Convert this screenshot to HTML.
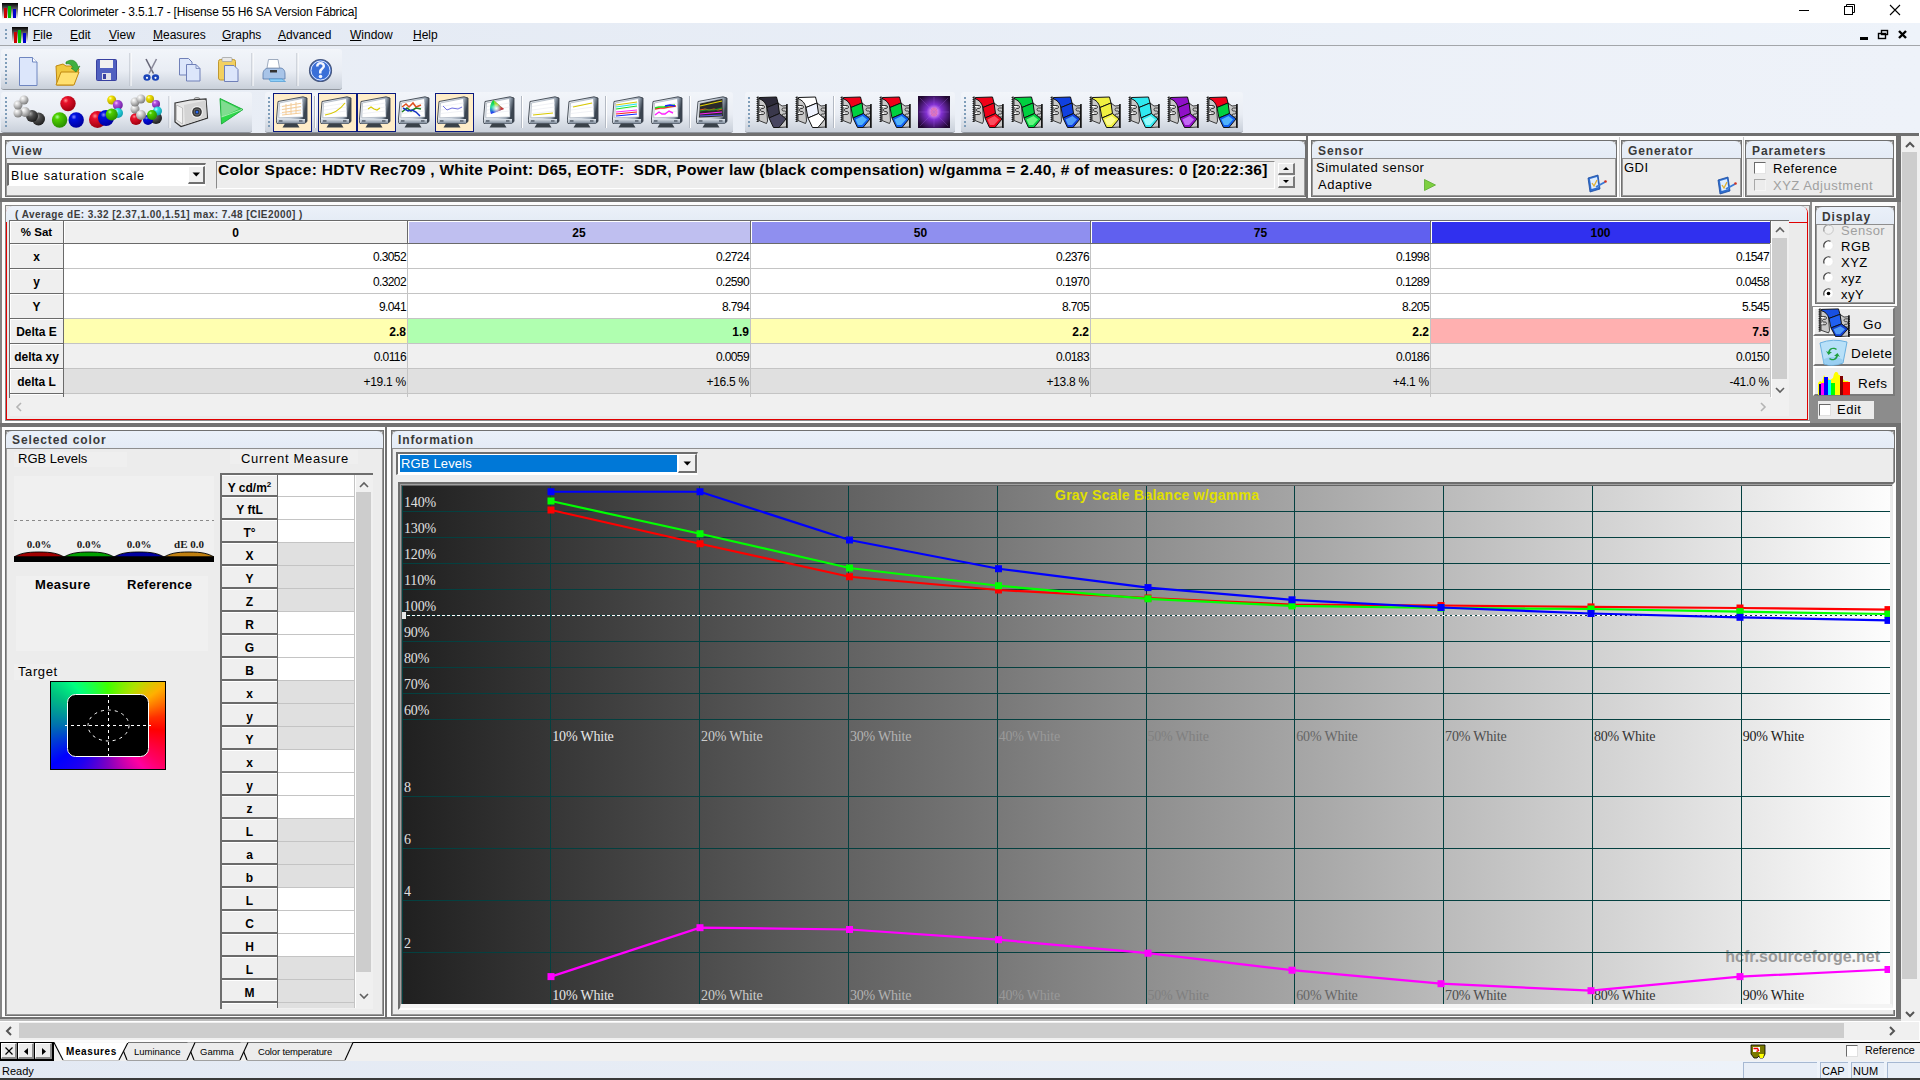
<!DOCTYPE html>
<html><head><meta charset="utf-8">
<style>
*{margin:0;padding:0;box-sizing:border-box}
html,body{width:1920px;height:1080px;overflow:hidden;background:#eef2f8;font-family:"Liberation Sans",sans-serif;font-size:12px;color:#000;position:relative}
.a{position:absolute}
.t{position:absolute;white-space:nowrap;line-height:1}
.b{font-weight:bold}
.u{font-size:13px;letter-spacing:0.5px}
.hd{position:absolute;background:linear-gradient(#eaf0f8,#e2e9f4);border-bottom:1px solid #a8acb2;border-radius:5px 5px 0 0}
.hdt{position:absolute;font-weight:bold;font-size:12px;letter-spacing:0.9px;color:#3a3a3a;white-space:nowrap;line-height:1}
</style></head><body>
<!-- TITLE BAR -->
<div class="a" style="left:0;top:0;width:1920px;height:23px;background:#fff"></div>
<svg class="a" style="left:2px;top:3px" width="16" height="16"><defs><linearGradient id="ig" x1="0" y1="0" x2="0" y2="1"><stop offset="0" stop-color="#000"/><stop offset="1" stop-color="#fff"/></linearGradient></defs><rect x="0" y="0" width="16" height="16" fill="url(#ig)"/><rect x="2" y="5" width="3" height="10" fill="#c00"/><rect x="6" y="3" width="3" height="12" fill="#0b0"/><rect x="11" y="6" width="3" height="9" fill="#00c"/></svg>
<div class="t" style="left:23px;top:6px;font-size:12px;letter-spacing:-0.21px">HCFR Colorimeter - 3.5.1.7 - [Hisense 55 H6 SA Version Fábrica]</div>
<svg class="a" style="left:1795px;top:0" width="125" height="23"><path d="M4 10.5h10" stroke="#000" stroke-width="1"/><rect x="49.5" y="6.5" width="8" height="8" fill="none" stroke="#000"/><path d="M51.5 6.5v-2h8v8h-2" fill="none" stroke="#000"/><path d="M95 5l10 10M105 5l-10 10" stroke="#000" stroke-width="1.1"/></svg>
<!-- MENU BAR -->
<div class="a" style="left:0;top:23px;width:1920px;height:22px;background:linear-gradient(90deg,#e3e9f3,#eef3fa)"></div>
<div class="a" style="left:0;top:45px;width:1920px;height:1px;background:#a3a6aa"></div>
<div class="a" style="left:0;top:46px;width:1920px;height:88px;background:linear-gradient(90deg,#e8edf5,#eef2f9)"></div>
<svg class="a" style="left:4px;top:27px" width="4" height="16"><rect x="1" y="2" width="2" height="2" fill="#7f9db9"/><rect x="1" y="6" width="2" height="2" fill="#7f9db9"/><rect x="1" y="10" width="2" height="2" fill="#7f9db9"/></svg>
<svg class="a" style="left:12px;top:27px" width="16" height="16"><defs><linearGradient id="ig2" x1="0" y1="0" x2="0" y2="1"><stop offset="0" stop-color="#000"/><stop offset="1" stop-color="#fff"/></linearGradient></defs><rect x="0" y="0" width="16" height="16" fill="url(#ig2)"/><rect x="2" y="5" width="3" height="11" fill="#c00"/><rect x="6" y="3" width="3" height="13" fill="#0b0"/><rect x="11" y="6" width="3" height="10" fill="#00c"/></svg>
<div class="t" style="left:33px;top:29px"><u>F</u>ile</div>
<div class="t" style="left:70px;top:29px"><u>E</u>dit</div>
<div class="t" style="left:109px;top:29px"><u>V</u>iew</div>
<div class="t" style="left:153px;top:29px"><u>M</u>easures</div>
<div class="t" style="left:222px;top:29px"><u>G</u>raphs</div>
<div class="t" style="left:278px;top:29px"><u>A</u>dvanced</div>
<div class="t" style="left:350px;top:29px"><u>W</u>indow</div>
<div class="t" style="left:413px;top:29px"><u>H</u>elp</div>
<svg class="a" style="left:1855px;top:28px" width="56" height="14"><rect x="5" y="9" width="8" height="3" fill="#000"/><rect x="23.5" y="5.5" width="7" height="5" fill="none" stroke="#000" stroke-width="1.4"/><rect x="26.5" y="2.5" width="6" height="4" fill="none" stroke="#000" stroke-width="1.4"/><path d="M44 3l7 7M51 3l-7 7" stroke="#000" stroke-width="2.4"/></svg>
<!-- TOOLBARS -->
<svg class="a" style="left:0;top:0" width="0" height="0"><defs>
<linearGradient id="tbg" x1="0" y1="0" x2="0" y2="1"><stop offset="0" stop-color="#f3f6fb"/><stop offset="0.55" stop-color="#e8edf4"/><stop offset="1" stop-color="#c8cfd9"/></linearGradient>
<radialGradient id="sR" cx="0.35" cy="0.3" r="0.7"><stop offset="0" stop-color="#ff9090"/><stop offset="0.25" stop-color="#e8102a"/><stop offset="1" stop-color="#a00010"/></radialGradient>
<radialGradient id="sG" cx="0.35" cy="0.3" r="0.7"><stop offset="0" stop-color="#b0ffa0"/><stop offset="0.25" stop-color="#4fd000"/><stop offset="1" stop-color="#2a9000"/></radialGradient>
<radialGradient id="sB" cx="0.35" cy="0.3" r="0.7"><stop offset="0" stop-color="#9090ff"/><stop offset="0.25" stop-color="#0010e0"/><stop offset="1" stop-color="#0000a0"/></radialGradient>
<radialGradient id="sW" cx="0.35" cy="0.3" r="0.7"><stop offset="0" stop-color="#fff"/><stop offset="0.4" stop-color="#d0d0d0"/><stop offset="1" stop-color="#808080"/></radialGradient>
<radialGradient id="sK" cx="0.35" cy="0.3" r="0.7"><stop offset="0" stop-color="#aaa"/><stop offset="0.4" stop-color="#505050"/><stop offset="1" stop-color="#202020"/></radialGradient>
<radialGradient id="sM" cx="0.35" cy="0.3" r="0.7"><stop offset="0" stop-color="#ffc0ff"/><stop offset="0.3" stop-color="#b050e0"/><stop offset="1" stop-color="#7020a0"/></radialGradient>
<radialGradient id="sC" cx="0.35" cy="0.3" r="0.7"><stop offset="0" stop-color="#d0ffff"/><stop offset="0.3" stop-color="#30e0e8"/><stop offset="1" stop-color="#10a0b0"/></radialGradient>
<radialGradient id="sY" cx="0.35" cy="0.3" r="0.7"><stop offset="0" stop-color="#ffffc0"/><stop offset="0.3" stop-color="#f0e000"/><stop offset="1" stop-color="#b0a000"/></radialGradient>
<linearGradient id="mon" x1="0" y1="0" x2="1" y2="0"><stop offset="0" stop-color="#e8ecf0"/><stop offset="0.6" stop-color="#b8c4d0"/><stop offset="1" stop-color="#505a68"/></linearGradient>
<symbol id="monitor" viewBox="0 0 32 32"><path d="M3 5.5 L26 1.5 L30 3 L30 25 L2 25 Z" fill="url(#mon)" stroke="#4a525c" stroke-width="0.8"/><path d="M5 8 L25 4.5 L26 19.5 L4 20.5 Z" fill="#fff" stroke="#8090a0" stroke-width="0.5"/><rect x="4" y="22" width="3" height="1.5" fill="#667"/><rect x="23" y="22" width="3" height="1.5" fill="#667"/><path d="M10 25 L20 25 L23 29 L7 29 Z" fill="#3a4048"/></symbol>
<symbol id="film" viewBox="0 0 32 32"><rect x="1" y="3" width="6" height="22" fill="#d8d8d8" stroke="#222" stroke-width="0.7"/><rect x="25" y="8" width="6" height="22" fill="#d8d8d8" stroke="#222" stroke-width="0.7"/><path d="M6 4 C14 1,18 4,20 10 L26 24 C26 29,23 31,19 31 L14 18 C12 11,9 10,6 11 Z" stroke="#111" stroke-width="1"/></symbol>
</defs></svg>
<!-- TB1 -->
<div class="a" style="left:1px;top:49px;width:341px;height:41px;background:linear-gradient(#f2f5fa,#e9edf4 55%,#c9d0da);border-bottom:1px solid #8f959d;border-radius:3px 3px 3px 3px"></div>
<svg class="a" style="left:5px;top:53px" width="4" height="34"><g fill="#7f9db9"><rect x="0" y="1" width="2" height="2"/><rect x="0" y="5" width="2" height="2"/><rect x="0" y="9" width="2" height="2"/><rect x="0" y="13" width="2" height="2"/><rect x="0" y="17" width="2" height="2"/><rect x="0" y="21" width="2" height="2"/><rect x="0" y="25" width="2" height="2"/><rect x="0" y="29" width="2" height="2"/></g></svg>
<svg class="a" style="left:0;top:46px" width="345" height="44">
<path d="M19.5 11.5h13l4.5 4.5v23.5h-17.5z" fill="#dce6fb" stroke="#6f86c0"/><path d="M32.5 11.5v4.5h4.5" fill="#fff" stroke="#6f86c0"/>
<path d="M56 20l7-2 3 2h10l3 3-6 16h-16z" fill="#f0c840" stroke="#c08810"/><path d="M56 39l5-13h18l-5 13z" fill="#ffe070" stroke="#c08810"/><path d="M66 16c6-4 11-1 12 5l2-1-4 6-5-4 2 0c-1-3-4-5-7-4z" fill="#40b040" stroke="#208020" stroke-width="0.6"/>
<rect x="96.5" y="13.5" width="20" height="21" rx="1" fill="#5060c0" stroke="#3840a0"/><rect x="100" y="14" width="13" height="8" fill="#f0f0f0"/><rect x="102" y="27" width="9" height="7" fill="#e0e0e8"/><rect x="103" y="28" width="3" height="5" fill="#3840a0"/>
<rect x="129.5" y="7" width="1" height="33" fill="#b4bac4"/><rect x="130.5" y="7" width="1" height="33" fill="#fff"/>
<path d="M146 13 L153.5 27.5" stroke="#667" stroke-width="1.6"/><path d="M156.5 13 L149 27.5" stroke="#889" stroke-width="1.6"/><ellipse cx="147" cy="31.5" rx="3.6" ry="3.2" fill="#1a44b8"/><ellipse cx="155.5" cy="31.5" rx="3.6" ry="3.2" fill="#1a44b8"/><circle cx="147" cy="31.8" r="1.1" fill="#fff"/><circle cx="155.5" cy="31.8" r="1.1" fill="#fff"/>
<path d="M179.5 12.5h9l3.5 3.5v13h-12.5z" fill="#dce6fb" stroke="#7080b8"/><path d="M186.5 18.5h9.5l4 4v12.5h-13.5z" fill="#dce6fb" stroke="#7080b8"/><path d="M196 18.5v4h4" fill="none" stroke="#7080b8" stroke-width="0.8"/>
<rect x="218.5" y="13.5" width="17" height="20.5" rx="2" fill="#f2d060" stroke="#c09830"/><rect x="222" y="11.5" width="10" height="4" rx="1" fill="#e8e8e8" stroke="#999" stroke-width="0.7"/><path d="M224.5 19.5h9.5l4 4v12h-13.5z" fill="#dce6fb" stroke="#7080b8"/>
<rect x="251.5" y="7" width="1" height="33" fill="#b4bac4"/><rect x="252.5" y="7" width="1" height="33" fill="#fff"/>
<path d="M263 28c0-4 3-6 6-6h11c3 0 5 2 5 6v5h-22z" fill="#a8c4e8" stroke="#5878a8" stroke-width="0.8"/><path d="M267 22l1.5-8.5h9.5l1.5 8.5z" fill="#fff" stroke="#8898b0" stroke-width="0.8"/><rect x="270" y="24" width="7" height="2.5" fill="#333"/><path d="M269 33h13l3.5 2.5h-15z" fill="#90d0f8" stroke="#3a90d0" stroke-width="0.6"/>
<rect x="296.5" y="7" width="1" height="33" fill="#b4bac4"/><rect x="297.5" y="7" width="1" height="33" fill="#fff"/>
<circle cx="320.5" cy="24.5" r="11" fill="#3a6fd8" stroke="#4a5a80" stroke-width="1.2"/><circle cx="320.5" cy="24.5" r="9.5" fill="none" stroke="#dfe8ff" stroke-width="1"/><path d="M316 20.5c0-3 2-4.5 4.5-4.5s4.5 1.5 4.5 4c0 3-3.5 3.5-3.5 6.5v1h-2.5v-1.5c0-3.5 3.5-4 3.5-6 0-1-1-1.8-2-1.8s-2 .8-2 2.3z" fill="#f4f6ff"/><circle cx="320.5" cy="30.5" r="1.8" fill="#f4f6ff"/>
</svg>
<!-- TB2 seg1 -->
<div class="a" style="left:1px;top:92px;width:251px;height:41px;background:linear-gradient(#f2f5fa,#e9edf4 55%,#c9d0da);border-bottom:1px solid #8f959d;border-radius:3px"></div>
<svg class="a" style="left:5px;top:96px" width="4" height="34"><g fill="#7f9db9"><rect x="0" y="1" width="2" height="2"/><rect x="0" y="5" width="2" height="2"/><rect x="0" y="9" width="2" height="2"/><rect x="0" y="13" width="2" height="2"/><rect x="0" y="17" width="2" height="2"/><rect x="0" y="21" width="2" height="2"/><rect x="0" y="25" width="2" height="2"/><rect x="0" y="29" width="2" height="2"/></g></svg>
<svg class="a" style="left:0;top:88px" width="260" height="46">
<circle cx="38.5" cy="31" r="6.5" fill="url(#sK)"/><circle cx="32" cy="28" r="6" fill="url(#sK)"/><circle cx="25" cy="24" r="5" fill="url(#sW)"/><circle cx="18" cy="25" r="4.5" fill="url(#sW)"/><circle cx="18" cy="17" r="4.5" fill="url(#sW)"/><circle cx="24" cy="12" r="4.5" fill="url(#sW)"/>
<circle cx="68" cy="15.6" r="7.7" fill="url(#sR)"/><circle cx="59.6" cy="32" r="7.7" fill="url(#sG)"/><circle cx="76.2" cy="32" r="7.7" fill="url(#sB)"/>
<circle cx="111.7" cy="12" r="4.5" fill="url(#sY)"/><circle cx="117.8" cy="17" r="5" fill="url(#sM)"/><circle cx="97.5" cy="31.4" r="8.5" fill="url(#sR)"/><circle cx="106" cy="30" r="8" fill="url(#sB)"/><circle cx="118" cy="25" r="5" fill="url(#sC)"/><circle cx="111.7" cy="26.4" r="6" fill="url(#sG)"/>
<circle cx="136" cy="31" r="6" fill="url(#sR)"/><circle cx="156" cy="30" r="6" fill="url(#sK)"/><circle cx="148" cy="32" r="5" fill="url(#sB)"/><circle cx="135" cy="21" r="4.5" fill="url(#sW)"/><circle cx="135" cy="14" r="4.5" fill="url(#sW)"/><circle cx="141" cy="11" r="4.5" fill="url(#sW)"/><circle cx="150" cy="11" r="4" fill="url(#sY)"/><circle cx="156" cy="16" r="4" fill="url(#sM)"/><circle cx="157.5" cy="23" r="4.5" fill="url(#sC)"/><circle cx="152" cy="27" r="5" fill="url(#sG)"/><circle cx="141" cy="27" r="5" fill="url(#sW)"/>
<rect x="168.5" y="8" width="1" height="32" fill="#b4bac4"/><rect x="169.5" y="8" width="1" height="32" fill="#fff"/>
<ellipse cx="197" cy="11" rx="3" ry="1.5" fill="#ccc" stroke="#555" stroke-width="0.6"/><path d="M175 15 L190 12 L206 11 L207.5 30 L181 38.5 L175 34 Z" fill="#e6e6e6" stroke="#333" stroke-width="1.2"/><path d="M184 17 L206 12.5 L206.5 29.5 L185 36.5 Z" fill="#d4d4d4"/><path d="M176.5 17v15l6 4v-16z" fill="#f4f4f4" stroke="#999" stroke-width="0.5"/><circle cx="197" cy="24" r="6" fill="#f0f0f0"/><circle cx="197" cy="24" r="4.8" fill="#333"/><circle cx="197" cy="24" r="3.4" fill="#666"/><circle cx="197" cy="24" r="2.2" fill="#222"/><circle cx="197" cy="24" r="1.5" fill="#2a6af0"/>
<path d="M220 10.5 L243 21.5 L221.5 36 Z" fill="#2ed84a" stroke="#22b040" stroke-width="1"/><path d="M221 12 L239 21 L221.5 29 Z" fill="#80dc90"/><path d="M221.5 29 L242 21.5" stroke="#c0f0c8" stroke-width="0.8"/>
</svg>
<svg class="a" style="left:0;top:0" width="0" height="0"><defs>
<linearGradient id="mon2" x1="0" y1="0" x2="1" y2="0.2"><stop offset="0" stop-color="#f4f6f8"/><stop offset="0.6" stop-color="#d0d8e2"/><stop offset="0.86" stop-color="#9aa6b4"/><stop offset="1" stop-color="#3a4450"/></linearGradient>
<linearGradient id="monb" x1="0" y1="0" x2="0" y2="1"><stop offset="0" stop-color="#dfe6ee"/><stop offset="1" stop-color="#7b8898"/></linearGradient>
<symbol id="monsym" viewBox="0 0 32 32"><path d="M2 5.5 L27 0.8 L31 2 L31 25.5 L28.5 27.5 L1 27.5 L0.3 25 Z" fill="url(#mon2)" stroke="#3a424c" stroke-width="0.9"/><path d="M3.5 7 L26.5 2.5 L27 21 L2.8 21.8 Z" fill="#fff" stroke="#8a96a6" stroke-width="0.5"/><path d="M4 10.5 L26.5 7M4 14 L26.5 11M4 17.5 L26.5 15" stroke="#eceef2" stroke-width="0.8"/><path d="M1 23h28v4.5h-27z" fill="url(#monb)"/><rect x="3" y="24.3" width="3.5" height="1.3" fill="#4a5460"/><rect x="23" y="24.3" width="3.5" height="1.3" fill="#4a5460"/><path d="M9 27.5 L21 27.5 L23.5 31.5 L6.5 31.5 Z" fill="#3a424a"/></symbol>
<symbol id="filmb" viewBox="0 0 32 32"><path d="M3 2 L8 3 C10 4,10.5 6,10.5 9 L11.5 25 L10.5 27.5 L3 24.5 Z" fill="#c8c8c8" stroke="#111" stroke-width="0.8"/><path d="M3 9.5h4c2 0 2 3 0 3h-1c-2 0-2 3 0 3h1c2 0 2 3 0 3h-4" fill="none" stroke="#111" stroke-width="0.8"/><path d="M3 10.5h3M3 17.5h2" stroke="#fff" stroke-width="1"/><path d="M22 7 L26 10 L30.5 9.5 L30.5 31 L23 31.5 Z" fill="#c8c8c8" stroke="#111" stroke-width="0.8"/><path d="M30.5 12h-3c-2 0-2 3 0 3h1c2 0 2 3 0 3h-1c-2 0-2 3 0 3h3" fill="none" stroke="#111" stroke-width="0.8"/><path d="M2 0.5V26" stroke="#111" stroke-width="1.3"/><path d="M1.2 1V26" stroke="#111" stroke-width="1.2" stroke-dasharray="1 1"/><path d="M30.8 8V32" stroke="#111" stroke-width="1.3"/><path d="M31.6 8.5V32" stroke="#111" stroke-width="1.2" stroke-dasharray="1 1"/></symbol>
</defs></svg>
<!-- TB2 seg2 -->
<div class="a" style="left:265px;top:92px;width:468px;height:41px;background:linear-gradient(#f2f5fa,#e9edf4 55%,#c9d0da);border-bottom:1px solid #8f959d;border-radius:3px"></div>
<svg class="a" style="left:268px;top:96px" width="4" height="34"><g fill="#7f9db9"><rect x="0" y="1" width="2" height="2"/><rect x="0" y="5" width="2" height="2"/><rect x="0" y="9" width="2" height="2"/><rect x="0" y="13" width="2" height="2"/><rect x="0" y="17" width="2" height="2"/><rect x="0" y="21" width="2" height="2"/><rect x="0" y="25" width="2" height="2"/><rect x="0" y="29" width="2" height="2"/></g></svg>
<div class="a" style="left:273px;top:93px;width:39px;height:39px;background:#ffedc8;border:1px solid #0a1a80"></div>
<div class="a" style="left:318px;top:93px;width:39px;height:39px;background:#ffedc8;border:1px solid #0a1a80"></div>
<div class="a" style="left:357px;top:93px;width:39px;height:39px;background:#ffedc8;border:1px solid #0a1a80"></div>
<div class="a" style="left:435px;top:93px;width:39px;height:39px;background:#ffedc8;border:1px solid #0a1a80"></div>
<svg class="a" style="left:260px;top:88px" width="480" height="46">
<rect x="54" y="8" width="1" height="32" fill="#b4bac4"/><rect x="55" y="8" width="1" height="32" fill="#fff"/>
<rect x="261" y="8" width="1" height="32" fill="#b4bac4"/><rect x="262" y="8" width="1" height="32" fill="#fff"/>
<rect x="345" y="8" width="1" height="32" fill="#b4bac4"/><rect x="346" y="8" width="1" height="32" fill="#fff"/>
<rect x="429" y="8" width="1" height="32" fill="#b4bac4"/><rect x="430" y="8" width="1" height="32" fill="#fff"/>
<g transform="translate(16,8)"><use href="#monsym" width="32" height="32"/><g stroke="#f4c890" stroke-width="0.9" fill="none"><path d="M6 10.5l19-3.2M6 13.5l19-3M6 16.5l19-2.5M6 19l19-2"/><path d="M10 8v11M15 7v11.5M20 6v12"/></g></g>
<g transform="translate(60,8)"><use href="#monsym" width="32" height="32"/><path d="M5 19c7-1 14-4 20-12" fill="none" stroke="#d8c800" stroke-width="1.2"/></g>
<g transform="translate(99,8)"><use href="#monsym" width="32" height="32"/><path d="M9 13l3-2 3 2 3 1 3-2" fill="none" stroke="#d8c800" stroke-width="1.2"/></g>
<g transform="translate(138,8)"><use href="#monsym" width="32" height="32"/><path d="M4 11l4-3 3 3 4-4 3 4 5-2" fill="none" stroke="#e05020" stroke-width="1.5"/><path d="M4 16l5-4 4 3 5-3 5 1" fill="none" stroke="#208020" stroke-width="1.5"/><path d="M5 12l5 3 4-1 4 2 4 4" fill="none" stroke="#1030c0" stroke-width="1.5"/></g>
<g transform="translate(177,8)"><use href="#monsym" width="32" height="32"/><path d="M6 10l4 4 5-2 6 1 4-2" fill="none" stroke="#6060e0" stroke-width="0.9"/></g>
<g transform="translate(223,8)"><use href="#monsym" width="32" height="32"/><defs><linearGradient id="cieg" x1="0" y1="0" x2="0" y2="1"><stop offset="0" stop-color="#00d020"/><stop offset="0.5" stop-color="#30e0a0"/><stop offset="1" stop-color="#2020ff"/></linearGradient><linearGradient id="cier" x1="0" y1="0" x2="1" y2="0"><stop offset="0.3" stop-color="#ff2020" stop-opacity="0"/><stop offset="1" stop-color="#ff1010" stop-opacity="1"/></linearGradient><radialGradient id="ciew" cx="0.45" cy="0.6" r="0.35"><stop offset="0" stop-color="#fff"/><stop offset="1" stop-color="#fff" stop-opacity="0"/></radialGradient></defs><path d="M8 18 C6 13,7 7,10.5 4 C13 6,16 9,21 13 Z" fill="url(#cieg)"/><path d="M8 18 C6 13,7 7,10.5 4 C13 6,16 9,21 13 Z" fill="url(#cier)"/><path d="M10.5 4 C12 6,14 7,16 9 L12 11 Z" fill="#e0f020" opacity="0.6"/><path d="M8 18 C6 13,7 7,10.5 4 C13 6,16 9,21 13 Z" fill="url(#ciew)"/></g>
<g transform="translate(268,8)"><use href="#monsym" width="32" height="32"/><path d="M5 19l20-2" stroke="#d8c800" stroke-width="1.2"/></g>
<g transform="translate(307,8)"><use href="#monsym" width="32" height="32"/><path d="M6 11l19-4" stroke="#d8c800" stroke-width="1.2"/></g>
<g transform="translate(352,8)"><use href="#monsym" width="32" height="32"/><g stroke-width="1.2" fill="none"><path d="M4 9l21-3" stroke="#d8c800"/><path d="M4 11l21-3" stroke="#20e8f0"/><path d="M4 13l21-3" stroke="#20e020"/><path d="M4 16l21-2" stroke="#ff20ff"/><path d="M4 18l21-2" stroke="#ff2020"/><path d="M4 20l21-2" stroke="#1020ff"/></g></g>
<g transform="translate(391,8)"><use href="#monsym" width="32" height="32"/><g stroke-width="1.4" fill="none"><path d="M4 13l5-1 4 0 5-1 7-1" stroke="#ff2020"/><path d="M4 12l4-1 5 0 4-1 7-1" stroke="#20e020"/><path d="M14 10l5-1 5 1" stroke="#1020ff"/><path d="M4 19l4-3 3 2 3 0 4-3 4 2" stroke="#ff20ff"/></g></g>
<g transform="translate(436,8)"><use href="#monsym" width="32" height="32"/><path d="M4 7.5 L26.5 2.8 L27 20.5 L3 21.5 Z" fill="#2a2a2a"/><g stroke-width="1.2" fill="none"><path d="M4 10l22-5" stroke="#e0d000"/><path d="M4 14l5-1 4 1 5-1 4 1 4-1" stroke="#e06020"/><path d="M4 15l6-1 4 0 4 0 8-2" stroke="#20a020"/><path d="M4 18l22-2" stroke="#ff20ff"/><path d="M4 20l22-1" stroke="#6060f0"/></g></g>
</svg>
<!-- TB2 seg3 -->
<div class="a" style="left:745px;top:92px;width:210px;height:41px;background:linear-gradient(#f2f5fa,#e9edf4 55%,#c9d0da);border-bottom:1px solid #8f959d;border-radius:3px"></div>
<svg class="a" style="left:748px;top:96px" width="4" height="34"><g fill="#7f9db9"><rect x="0" y="1" width="2" height="2"/><rect x="0" y="5" width="2" height="2"/><rect x="0" y="9" width="2" height="2"/><rect x="0" y="13" width="2" height="2"/><rect x="0" y="17" width="2" height="2"/><rect x="0" y="21" width="2" height="2"/><rect x="0" y="25" width="2" height="2"/><rect x="0" y="29" width="2" height="2"/></g></svg>
<!-- TB2 seg4 -->
<div class="a" style="left:961px;top:92px;width:282px;height:41px;background:linear-gradient(#f2f5fa,#e9edf4 55%,#c9d0da);border-bottom:1px solid #8f959d;border-radius:3px"></div>
<svg class="a" style="left:964px;top:96px" width="4" height="34"><g fill="#7f9db9"><rect x="0" y="1" width="2" height="2"/><rect x="0" y="5" width="2" height="2"/><rect x="0" y="9" width="2" height="2"/><rect x="0" y="13" width="2" height="2"/><rect x="0" y="17" width="2" height="2"/><rect x="0" y="21" width="2" height="2"/><rect x="0" y="25" width="2" height="2"/><rect x="0" y="29" width="2" height="2"/></g></svg>
<svg class="a" style="left:740px;top:88px" width="510" height="46">
<rect x="93" y="8" width="1" height="32" fill="#b4bac4"/><rect x="94" y="8" width="1" height="32" fill="#fff"/>
<g transform="translate(16,8)"><use href="#filmb" width="32" height="32"/><path d="M3.5 1.5 L20.5 1 L22 7 L11 11.5 C9.5 6.5,7 4,3.5 3 Z" fill="#2c2a38" stroke="#111" stroke-width="1"/><path d="M11 11.5 L22 7 L23.5 17.5 L13 22 Z" fill="#3a384c" stroke="#111" stroke-width="1"/><path d="M13 22 L23.5 17.5 L30 23 L23 31.5 L17.5 31.5 Z" fill="#484660" stroke="#111" stroke-width="1"/></g>
<g transform="translate(55,8)"><use href="#filmb" width="32" height="32"/><path d="M3.5 1.5 L20.5 1 L22 7 L11 11.5 C9.5 6.5,7 4,3.5 3 Z" fill="#ffffff" stroke="#111" stroke-width="1"/><path d="M11 11.5 L22 7 L23.5 17.5 L13 22 Z" fill="#f0f4ff" stroke="#111" stroke-width="1"/><path d="M13 22 L23.5 17.5 L30 23 L23 31.5 L17.5 31.5 Z" fill="#ffffff" stroke="#111" stroke-width="1"/></g>
<g transform="translate(100,8)"><use href="#filmb" width="32" height="32"/><path d="M3.5 1.5 L20.5 1 L22 7 L11 11.5 C9.5 6.5,7 4,3.5 3 Z" fill="#f00018" stroke="#111" stroke-width="1"/><path d="M11 11.5 L22 7 L23.5 17.5 L13 22 Z" fill="#00d040" stroke="#111" stroke-width="1"/><path d="M13 22 L23.5 17.5 L30 23 L23 31.5 L17.5 31.5 Z" fill="#1060f0" stroke="#111" stroke-width="1"/><path d="M15.5 23.5 L22.5 20 L27 23.5 L22 29 L18 29 Z" fill="#60c8ff" opacity="0.8"/></g>
<g transform="translate(139,8)"><use href="#filmb" width="32" height="32"/><path d="M3.5 1.5 L20.5 1 L22 7 L11 11.5 C9.5 6.5,7 4,3.5 3 Z" fill="#f00018" stroke="#111" stroke-width="1"/><path d="M11 11.5 L22 7 L23.5 17.5 L13 22 Z" fill="#00d040" stroke="#111" stroke-width="1"/><path d="M13 22 L23.5 17.5 L30 23 L23 31.5 L17.5 31.5 Z" fill="#1060f0" stroke="#111" stroke-width="1"/><path d="M15.5 23.5 L22.5 20 L27 23.5 L22 29 L18 29 Z" fill="#60c8ff" opacity="0.8"/></g>
<defs><radialGradient id="pur" cx="0.5" cy="0.5" r="0.6"><stop offset="0" stop-color="#fff"/><stop offset="0.12" stop-color="#f0a0ff"/><stop offset="0.4" stop-color="#8030d0"/><stop offset="1" stop-color="#200830"/></radialGradient></defs>
<rect x="178" y="8" width="32" height="32" fill="url(#pur)"/><ellipse cx="194" cy="24" rx="3.5" ry="4.5" fill="#e070b0" opacity="0.85"/><path d="M180 10l28 28M208 10l-28 28M194 9v30M179 24h30" stroke="#a060e0" stroke-width="0.5" opacity="0.6"/>
<g transform="translate(232,8)"><use href="#filmb" width="32" height="32"/><path d="M3.5 1.5 L20.5 1 L22 7 L11 11.5 C9.5 6.5,7 4,3.5 3 Z" fill="#f00018" stroke="#111" stroke-width="1"/><path d="M11 11.5 L22 7 L23.5 17.5 L13 22 Z" fill="#f00018" stroke="#111" stroke-width="1"/><path d="M13 22 L23.5 17.5 L30 23 L23 31.5 L17.5 31.5 Z" fill="#f00018" stroke="#111" stroke-width="1"/><path d="M15.5 23.5 L22.5 20 L27 23.5 L22 29 L18 29 Z" fill="#ff6070" opacity="0.8"/></g>
<g transform="translate(271,8)"><use href="#filmb" width="32" height="32"/><path d="M3.5 1.5 L20.5 1 L22 7 L11 11.5 C9.5 6.5,7 4,3.5 3 Z" fill="#00d040" stroke="#111" stroke-width="1"/><path d="M11 11.5 L22 7 L23.5 17.5 L13 22 Z" fill="#00d040" stroke="#111" stroke-width="1"/><path d="M13 22 L23.5 17.5 L30 23 L23 31.5 L17.5 31.5 Z" fill="#00d040" stroke="#111" stroke-width="1"/><path d="M15.5 23.5 L22.5 20 L27 23.5 L22 29 L18 29 Z" fill="#80ff90" opacity="0.8"/></g>
<g transform="translate(310,8)"><use href="#filmb" width="32" height="32"/><path d="M3.5 1.5 L20.5 1 L22 7 L11 11.5 C9.5 6.5,7 4,3.5 3 Z" fill="#1040e0" stroke="#111" stroke-width="1"/><path d="M11 11.5 L22 7 L23.5 17.5 L13 22 Z" fill="#1040e0" stroke="#111" stroke-width="1"/><path d="M13 22 L23.5 17.5 L30 23 L23 31.5 L17.5 31.5 Z" fill="#1040e0" stroke="#111" stroke-width="1"/><path d="M15.5 23.5 L22.5 20 L27 23.5 L22 29 L18 29 Z" fill="#60b0ff" opacity="0.8"/></g>
<g transform="translate(349,8)"><use href="#filmb" width="32" height="32"/><path d="M3.5 1.5 L20.5 1 L22 7 L11 11.5 C9.5 6.5,7 4,3.5 3 Z" fill="#f0f040" stroke="#111" stroke-width="1"/><path d="M11 11.5 L22 7 L23.5 17.5 L13 22 Z" fill="#f0f040" stroke="#111" stroke-width="1"/><path d="M13 22 L23.5 17.5 L30 23 L23 31.5 L17.5 31.5 Z" fill="#f0f040" stroke="#111" stroke-width="1"/><path d="M15.5 23.5 L22.5 20 L27 23.5 L22 29 L18 29 Z" fill="#ffffa0" opacity="0.8"/></g>
<g transform="translate(388,8)"><use href="#filmb" width="32" height="32"/><path d="M3.5 1.5 L20.5 1 L22 7 L11 11.5 C9.5 6.5,7 4,3.5 3 Z" fill="#30e8f0" stroke="#111" stroke-width="1"/><path d="M11 11.5 L22 7 L23.5 17.5 L13 22 Z" fill="#30e8f0" stroke="#111" stroke-width="1"/><path d="M13 22 L23.5 17.5 L30 23 L23 31.5 L17.5 31.5 Z" fill="#30e8f0" stroke="#111" stroke-width="1"/><path d="M15.5 23.5 L22.5 20 L27 23.5 L22 29 L18 29 Z" fill="#b0ffff" opacity="0.8"/></g>
<g transform="translate(427,8)"><use href="#filmb" width="32" height="32"/><path d="M3.5 1.5 L20.5 1 L22 7 L11 11.5 C9.5 6.5,7 4,3.5 3 Z" fill="#9010c8" stroke="#111" stroke-width="1"/><path d="M11 11.5 L22 7 L23.5 17.5 L13 22 Z" fill="#9010c8" stroke="#111" stroke-width="1"/><path d="M13 22 L23.5 17.5 L30 23 L23 31.5 L17.5 31.5 Z" fill="#9010c8" stroke="#111" stroke-width="1"/><path d="M15.5 23.5 L22.5 20 L27 23.5 L22 29 L18 29 Z" fill="#d080ff" opacity="0.8"/></g>
<g transform="translate(466,8)"><use href="#filmb" width="32" height="32"/><path d="M3.5 1.5 L20.5 1 L22 7 L11 11.5 C9.5 6.5,7 4,3.5 3 Z" fill="#f00018" stroke="#111" stroke-width="1"/><path d="M11 11.5 L22 7 L23.5 17.5 L13 22 Z" fill="#00d040" stroke="#111" stroke-width="1"/><path d="M13 22 L23.5 17.5 L30 23 L23 31.5 L17.5 31.5 Z" fill="#1060f0" stroke="#111" stroke-width="1"/><path d="M15.5 23.5 L22.5 20 L27 23.5 L22 29 L18 29 Z" fill="#60c8ff" opacity="0.8"/></g>
</svg>
<!-- CONTENT FRAMES -->
<div class="a" style="left:0;top:133px;width:1920px;height:909px;background:#fdfdfd"></div>
<div class="a" style="left:0;top:133px;width:1919px;height:3px;background:#6f6f6f"></div>
<div class="a" style="left:0;top:136px;width:2px;height:906px;background:#858585"></div>
<div class="a" style="left:1896px;top:136px;width:5px;height:885px;background:#717171"></div>
<div class="a" style="left:1901px;top:136px;width:19px;height:886px;background:#f0f0f0"></div>
<div class="a" style="left:1902px;top:152px;width:15px;height:827px;background:#cdcdcd"></div>
<svg class="a" style="left:1901px;top:136px" width="19" height="886"><path d="M5 11l4-4 4 4" fill="none" stroke="#555" stroke-width="2"/><path d="M5 876l4 4 4-4" fill="none" stroke="#555" stroke-width="2"/></svg>
<!-- row separators -->
<div class="a" style="left:0;top:198px;width:1901px;height:4px;background:#717171"></div>
<div class="a" style="left:0;top:423px;width:1901px;height:4px;background:#717171"></div>
<div class="a" style="left:0;top:1017px;width:1901px;height:3px;background:#717171"></div>
<!-- vertical separators top row -->
<div class="a" style="left:1306px;top:136px;width:2px;height:62px;background:#717171"></div>
<!-- mid row separator -->
<div class="a" style="left:1810px;top:202px;width:2px;height:221px;background:#8d8d8d"></div>
<div class="a" style="left:1812px;top:202px;width:89px;height:221px;background:#8d8d8d"></div>
<!-- bottom row separator -->
<div class="a" style="left:385px;top:427px;width:2px;height:590px;background:#717171"></div>
<!-- TOP PANES -->
<div class="a" style="left:5px;top:140px;width:1301px;height:57px;background:#ececec;border:1px solid #707070;box-shadow:inset 0 0 0 1px #9a9a9a"></div>
<div class="a" style="left:6px;top:141px;width:1299px;height:18px;background:linear-gradient(#eaf0f9,#e4ebf5);border-bottom:1px solid #8e8e8e;border-radius:6px 6px 0 0;box-shadow:0 0 0 1px #9a9a9a inset"></div>
<div class="a" style="left:6px;top:141px;width:1299px;height:18px;background:linear-gradient(#eaf0f9,#e4ebf5);border-bottom:1px solid #8e8e8e;border-radius:6px 6px 0 0"></div>
<div class="hdt" style="left:12px;top:145px">View</div>
<div class="a" style="left:1311px;top:140px;width:306px;height:57px;background:#ececec;border:1px solid #707070;box-shadow:inset 0 0 0 1px #9a9a9a"></div>
<div class="a" style="left:1312px;top:141px;width:304px;height:18px;background:linear-gradient(#eaf0f9,#e4ebf5);border-bottom:1px solid #8e8e8e;border-radius:6px 6px 0 0;box-shadow:0 0 0 1px #9a9a9a inset"></div>
<div class="a" style="left:1312px;top:141px;width:304px;height:18px;background:linear-gradient(#eaf0f9,#e4ebf5);border-bottom:1px solid #8e8e8e;border-radius:6px 6px 0 0"></div>
<div class="hdt" style="left:1318px;top:145px">Sensor</div>
<div class="a" style="left:1621px;top:140px;width:121px;height:57px;background:#ececec;border:1px solid #707070;box-shadow:inset 0 0 0 1px #9a9a9a"></div>
<div class="a" style="left:1622px;top:141px;width:119px;height:18px;background:linear-gradient(#eaf0f9,#e4ebf5);border-bottom:1px solid #8e8e8e;border-radius:6px 6px 0 0;box-shadow:0 0 0 1px #9a9a9a inset"></div>
<div class="a" style="left:1622px;top:141px;width:119px;height:18px;background:linear-gradient(#eaf0f9,#e4ebf5);border-bottom:1px solid #8e8e8e;border-radius:6px 6px 0 0"></div>
<div class="hdt" style="left:1628px;top:145px">Generator</div>
<div class="a" style="left:1745px;top:140px;width:149px;height:57px;background:#ececec;border:1px solid #707070;box-shadow:inset 0 0 0 1px #9a9a9a"></div>
<div class="a" style="left:1746px;top:141px;width:147px;height:18px;background:linear-gradient(#eaf0f9,#e4ebf5);border-bottom:1px solid #8e8e8e;border-radius:6px 6px 0 0;box-shadow:0 0 0 1px #9a9a9a inset"></div>
<div class="a" style="left:1746px;top:141px;width:147px;height:18px;background:linear-gradient(#eaf0f9,#e4ebf5);border-bottom:1px solid #8e8e8e;border-radius:6px 6px 0 0"></div>
<div class="hdt" style="left:1752px;top:145px">Parameters</div>
<div class="a" style="left:1619px;top:137px;width:1px;height:60px;background:#c8c8c8"></div>
<div class="a" style="left:1743px;top:137px;width:1px;height:60px;background:#c8c8c8"></div>
<!-- VIEW PANE CONTENT -->
<div class="a" style="left:7px;top:163px;width:199px;height:23px;background:#fff;border-top:2px solid #6e6e6e;border-left:2px solid #6e6e6e;border-right:1px solid #f4f4f4;border-bottom:1px solid #fff"></div>
<div class="t" style="left:11px;top:170px;font-size:12.5px;letter-spacing:0.85px">Blue saturation scale</div>
<div class="a" style="left:188px;top:166px;width:17px;height:18px;background:#f0f0f0;border-right:2px solid #707070;border-bottom:2px solid #707070;border-top:1px solid #fff;border-left:1px solid #fff"></div>
<svg class="a" style="left:192px;top:172px" width="9" height="5"><path d="M0.5 0.5h7.5l-3.75 4z" fill="#000"/></svg>
<div class="a" style="left:216px;top:161px;width:1059px;height:28px;background:#ededed;border-top:1px solid #8a8a8a;border-left:1px solid #8a8a8a;border-right:1px solid #fff;border-bottom:1px solid #fff"></div>
<div class="t b" style="left:218px;top:162px;font-size:15.5px;letter-spacing:0.29px">Color Space: HDTV Rec709 , White Point: D65, EOTF:&nbsp; SDR, Power law (black compensation) w/gamma = 2.40, # of measures: 0 [20:22:36]</div>
<div class="a" style="left:1278px;top:163px;width:17px;height:12px;background:#ececec;border-right:2px solid #7a7a7a;border-bottom:2px solid #7a7a7a;border-top:1px solid #fff;border-left:1px solid #fff"></div>
<div class="a" style="left:1278px;top:176px;width:17px;height:12px;background:#ececec;border-right:2px solid #7a7a7a;border-bottom:2px solid #7a7a7a;border-top:1px solid #fff;border-left:1px solid #fff"></div>
<svg class="a" style="left:1282px;top:165px" width="10" height="22"><path d="M1 5h6l-3-3z" fill="#000"/><path d="M1 15h6l-3 3z" fill="#000"/></svg>
<!-- SENSOR -->
<div class="t u" style="left:1316px;top:161px">Simulated sensor</div>
<div class="t u" style="left:1318px;top:178px">Adaptive</div>
<svg class="a" style="left:1423px;top:178px" width="14" height="14"><path d="M1.5 1.5l11 5.5-11 5.5z" fill="#7ed040" stroke="#5aaa30" stroke-width="0.8"/></svg>
<svg class="a" style="left:1586px;top:174px" width="22" height="20"><path d="M2 4l10-3 2 14-10 3z" fill="#2f6fd0" stroke="#1a4aa0" stroke-width="0.8"/><path d="M4 5l7-2 1.5 10-7 2z" fill="#dfeeff"/><path d="M6 9l2 3 3-6" fill="none" stroke="#e0b030" stroke-width="1.3"/><path d="M10 13l9-5" stroke="#3a7ad8" stroke-width="2"/><circle cx="19.5" cy="7.5" r="1.3" fill="#d03020"/></svg>
<!-- GENERATOR -->
<div class="t u" style="left:1624px;top:161px">GDI</div>
<svg class="a" style="left:1716px;top:176px" width="22" height="20"><path d="M2 4l10-3 2 14-10 3z" fill="#2f6fd0" stroke="#1a4aa0" stroke-width="0.8"/><path d="M4 5l7-2 1.5 10-7 2z" fill="#dfeeff"/><path d="M6 9l2 3 3-6" fill="none" stroke="#e0b030" stroke-width="1.3"/><path d="M10 13l9-5" stroke="#3a7ad8" stroke-width="2"/><circle cx="19.5" cy="7.5" r="1.3" fill="#d03020"/></svg>
<!-- PARAMETERS -->
<div class="a" style="left:1754px;top:162px;width:12px;height:12px;background:#fff;border-top:1px solid #6a6a6a;border-left:1px solid #6a6a6a;border-right:1px solid #e4e4e4;border-bottom:1px solid #e4e4e4"></div>
<div class="t u" style="left:1773px;top:162px">Reference</div>
<div class="a" style="left:1754px;top:179px;width:12px;height:12px;background:#ececec;border-top:1px solid #a8a8a8;border-left:1px solid #a8a8a8;border-right:1px solid #f4f4f4;border-bottom:1px solid #f4f4f4"></div>
<div class="t u" style="left:1773px;top:179px;color:#a0a0a0">XYZ Adjustment</div>
<!-- TABLE PANE -->
<div class="a" style="left:5px;top:205px;width:1805px;height:216px;background:#ebebeb;border:1px solid #8a8a8a"></div>
<div class="a" style="left:6px;top:206px;width:1802px;height:214px;border:1px solid #e00000;border-top-color:#8a8a8a;border-radius:7px 7px 0 0"></div>
<div class="a" style="left:6px;top:206px;width:1801px;height:16px;background:linear-gradient(#ecf1f9,#e4ebf5);border-radius:6px 6px 0 0"></div>
<div class="a" style="left:1788px;top:222px;width:19px;height:1px;background:#e00000"></div>
<div class="t b" style="left:15px;top:210px;font-size:10px;letter-spacing:0.45px;color:#3c3c3c">( Average dE: 3.32 [2.37,1.00,1.51] max: 7.48 [CIE2000] )</div>
<div class="a" style="left:9px;top:220px;width:1780px;height:178px;background:#f0f0f0;border-top:1px solid #6a6a6a;border-left:1px solid #6a6a6a"></div>
<div class="a" style="left:10px;top:221px;width:53px;height:22px;background:#efefef;border-top:1px solid #fff;border-left:1px solid #fff"></div>
<div class="t b" style="left:10px;top:227px;width:53px;text-align:center;font-size:11.5px;letter-spacing:0px">% Sat</div>
<div class="a" style="left:63px;top:221px;width:1px;height:176px;background:#6a6a6a"></div>
<div class="a" style="left:64px;top:221px;width:343px;height:22px;background:#f0f0f0;border-top:1px solid #fff;border-left:1px solid #fff"></div>
<div class="t b" style="left:64px;top:227px;width:343px;text-align:center;font-size:12px">0</div>
<div class="a" style="left:407px;top:221px;width:1px;height:22px;background:#6a6a6a"></div>
<div class="a" style="left:408px;top:221px;width:342px;height:22px;background:#bfbff0;border-top:1px solid #fff;border-left:1px solid #fff"></div>
<div class="t b" style="left:408px;top:227px;width:342px;text-align:center;font-size:12px">25</div>
<div class="a" style="left:750px;top:221px;width:1px;height:22px;background:#6a6a6a"></div>
<div class="a" style="left:751px;top:221px;width:339px;height:22px;background:#8f8fef;border-top:1px solid #fff;border-left:1px solid #fff"></div>
<div class="t b" style="left:751px;top:227px;width:339px;text-align:center;font-size:12px">50</div>
<div class="a" style="left:1090px;top:221px;width:1px;height:22px;background:#6a6a6a"></div>
<div class="a" style="left:1091px;top:221px;width:339px;height:22px;background:#6060ef;border-top:1px solid #fff;border-left:1px solid #fff"></div>
<div class="t b" style="left:1091px;top:227px;width:339px;text-align:center;font-size:12px">75</div>
<div class="a" style="left:1430px;top:221px;width:1px;height:22px;background:#6a6a6a"></div>
<div class="a" style="left:1431px;top:221px;width:339px;height:22px;background:#3030ef;border-top:1px solid #fff;border-left:1px solid #fff"></div>
<div class="t b" style="left:1431px;top:227px;width:339px;text-align:center;font-size:12px">100</div>
<div class="a" style="left:1770px;top:221px;width:1px;height:22px;background:#6a6a6a"></div>
<div class="a" style="left:10px;top:243px;width:1760px;height:1px;background:#6a6a6a"></div>
<div class="a" style="left:10px;top:244px;width:53px;height:24px;background:#efefef;border-top:1px solid #fff;border-left:1px solid #fff"></div>
<div class="t b" style="left:10px;top:251px;width:53px;text-align:center;font-size:12px">x</div>
<div class="a" style="left:10px;top:268px;width:53px;height:1px;background:#6a6a6a"></div>
<div class="a" style="left:64px;top:244px;width:343px;height:24px;background:#ffffff"></div>
<div class="t" style="left:64px;top:251px;width:342px;text-align:right;font-size:12px;letter-spacing:-0.6px">0.3052</div>
<div class="a" style="left:407px;top:244px;width:1px;height:25px;background:#c4c4c4"></div>
<div class="a" style="left:408px;top:244px;width:342px;height:24px;background:#ffffff"></div>
<div class="t" style="left:408px;top:251px;width:341px;text-align:right;font-size:12px;letter-spacing:-0.6px">0.2724</div>
<div class="a" style="left:750px;top:244px;width:1px;height:25px;background:#c4c4c4"></div>
<div class="a" style="left:751px;top:244px;width:339px;height:24px;background:#ffffff"></div>
<div class="t" style="left:751px;top:251px;width:338px;text-align:right;font-size:12px;letter-spacing:-0.6px">0.2376</div>
<div class="a" style="left:1090px;top:244px;width:1px;height:25px;background:#c4c4c4"></div>
<div class="a" style="left:1091px;top:244px;width:339px;height:24px;background:#ffffff"></div>
<div class="t" style="left:1091px;top:251px;width:338px;text-align:right;font-size:12px;letter-spacing:-0.6px">0.1998</div>
<div class="a" style="left:1430px;top:244px;width:1px;height:25px;background:#c4c4c4"></div>
<div class="a" style="left:1431px;top:244px;width:339px;height:24px;background:#ffffff"></div>
<div class="t" style="left:1431px;top:251px;width:338px;text-align:right;font-size:12px;letter-spacing:-0.6px">0.1547</div>
<div class="a" style="left:1770px;top:244px;width:1px;height:25px;background:#c4c4c4"></div>
<div class="a" style="left:64px;top:268px;width:1706px;height:1px;background:#c4c4c4"></div>
<div class="a" style="left:10px;top:269px;width:53px;height:24px;background:#efefef;border-top:1px solid #fff;border-left:1px solid #fff"></div>
<div class="t b" style="left:10px;top:276px;width:53px;text-align:center;font-size:12px">y</div>
<div class="a" style="left:10px;top:293px;width:53px;height:1px;background:#6a6a6a"></div>
<div class="a" style="left:64px;top:269px;width:343px;height:24px;background:#ffffff"></div>
<div class="t" style="left:64px;top:276px;width:342px;text-align:right;font-size:12px;letter-spacing:-0.6px">0.3202</div>
<div class="a" style="left:407px;top:269px;width:1px;height:25px;background:#c4c4c4"></div>
<div class="a" style="left:408px;top:269px;width:342px;height:24px;background:#ffffff"></div>
<div class="t" style="left:408px;top:276px;width:341px;text-align:right;font-size:12px;letter-spacing:-0.6px">0.2590</div>
<div class="a" style="left:750px;top:269px;width:1px;height:25px;background:#c4c4c4"></div>
<div class="a" style="left:751px;top:269px;width:339px;height:24px;background:#ffffff"></div>
<div class="t" style="left:751px;top:276px;width:338px;text-align:right;font-size:12px;letter-spacing:-0.6px">0.1970</div>
<div class="a" style="left:1090px;top:269px;width:1px;height:25px;background:#c4c4c4"></div>
<div class="a" style="left:1091px;top:269px;width:339px;height:24px;background:#ffffff"></div>
<div class="t" style="left:1091px;top:276px;width:338px;text-align:right;font-size:12px;letter-spacing:-0.6px">0.1289</div>
<div class="a" style="left:1430px;top:269px;width:1px;height:25px;background:#c4c4c4"></div>
<div class="a" style="left:1431px;top:269px;width:339px;height:24px;background:#ffffff"></div>
<div class="t" style="left:1431px;top:276px;width:338px;text-align:right;font-size:12px;letter-spacing:-0.6px">0.0458</div>
<div class="a" style="left:1770px;top:269px;width:1px;height:25px;background:#c4c4c4"></div>
<div class="a" style="left:64px;top:293px;width:1706px;height:1px;background:#c4c4c4"></div>
<div class="a" style="left:10px;top:294px;width:53px;height:24px;background:#efefef;border-top:1px solid #fff;border-left:1px solid #fff"></div>
<div class="t b" style="left:10px;top:301px;width:53px;text-align:center;font-size:12px">Y</div>
<div class="a" style="left:10px;top:318px;width:53px;height:1px;background:#6a6a6a"></div>
<div class="a" style="left:64px;top:294px;width:343px;height:24px;background:#ffffff"></div>
<div class="t" style="left:64px;top:301px;width:342px;text-align:right;font-size:12px;letter-spacing:-0.6px">9.041</div>
<div class="a" style="left:407px;top:294px;width:1px;height:25px;background:#c4c4c4"></div>
<div class="a" style="left:408px;top:294px;width:342px;height:24px;background:#ffffff"></div>
<div class="t" style="left:408px;top:301px;width:341px;text-align:right;font-size:12px;letter-spacing:-0.6px">8.794</div>
<div class="a" style="left:750px;top:294px;width:1px;height:25px;background:#c4c4c4"></div>
<div class="a" style="left:751px;top:294px;width:339px;height:24px;background:#ffffff"></div>
<div class="t" style="left:751px;top:301px;width:338px;text-align:right;font-size:12px;letter-spacing:-0.6px">8.705</div>
<div class="a" style="left:1090px;top:294px;width:1px;height:25px;background:#c4c4c4"></div>
<div class="a" style="left:1091px;top:294px;width:339px;height:24px;background:#ffffff"></div>
<div class="t" style="left:1091px;top:301px;width:338px;text-align:right;font-size:12px;letter-spacing:-0.6px">8.205</div>
<div class="a" style="left:1430px;top:294px;width:1px;height:25px;background:#c4c4c4"></div>
<div class="a" style="left:1431px;top:294px;width:339px;height:24px;background:#ffffff"></div>
<div class="t" style="left:1431px;top:301px;width:338px;text-align:right;font-size:12px;letter-spacing:-0.6px">5.545</div>
<div class="a" style="left:1770px;top:294px;width:1px;height:25px;background:#c4c4c4"></div>
<div class="a" style="left:64px;top:318px;width:1706px;height:1px;background:#c4c4c4"></div>
<div class="a" style="left:10px;top:319px;width:53px;height:24px;background:#efefef;border-top:1px solid #fff;border-left:1px solid #fff"></div>
<div class="t b" style="left:10px;top:326px;width:53px;text-align:center;font-size:12px">Delta E</div>
<div class="a" style="left:10px;top:343px;width:53px;height:1px;background:#6a6a6a"></div>
<div class="a" style="left:64px;top:319px;width:343px;height:24px;background:#ffffb0"></div>
<div class="t b" style="left:64px;top:326px;width:342px;text-align:right;font-size:12px">2.8</div>
<div class="a" style="left:407px;top:319px;width:1px;height:25px;background:#c4c4c4"></div>
<div class="a" style="left:408px;top:319px;width:342px;height:24px;background:#b0ffb0"></div>
<div class="t b" style="left:408px;top:326px;width:341px;text-align:right;font-size:12px">1.9</div>
<div class="a" style="left:750px;top:319px;width:1px;height:25px;background:#c4c4c4"></div>
<div class="a" style="left:751px;top:319px;width:339px;height:24px;background:#ffffb0"></div>
<div class="t b" style="left:751px;top:326px;width:338px;text-align:right;font-size:12px">2.2</div>
<div class="a" style="left:1090px;top:319px;width:1px;height:25px;background:#c4c4c4"></div>
<div class="a" style="left:1091px;top:319px;width:339px;height:24px;background:#ffffb0"></div>
<div class="t b" style="left:1091px;top:326px;width:338px;text-align:right;font-size:12px">2.2</div>
<div class="a" style="left:1430px;top:319px;width:1px;height:25px;background:#c4c4c4"></div>
<div class="a" style="left:1431px;top:319px;width:339px;height:24px;background:#ffb0b0"></div>
<div class="t b" style="left:1431px;top:326px;width:338px;text-align:right;font-size:12px">7.5</div>
<div class="a" style="left:1770px;top:319px;width:1px;height:25px;background:#c4c4c4"></div>
<div class="a" style="left:64px;top:343px;width:1706px;height:1px;background:#c4c4c4"></div>
<div class="a" style="left:10px;top:344px;width:53px;height:24px;background:#efefef;border-top:1px solid #fff;border-left:1px solid #fff"></div>
<div class="t b" style="left:10px;top:351px;width:53px;text-align:center;font-size:12px">delta xy</div>
<div class="a" style="left:10px;top:368px;width:53px;height:1px;background:#6a6a6a"></div>
<div class="a" style="left:64px;top:344px;width:343px;height:24px;background:#f0f0f0"></div>
<div class="t" style="left:64px;top:351px;width:342px;text-align:right;font-size:12px;letter-spacing:-0.6px">0.0116</div>
<div class="a" style="left:407px;top:344px;width:1px;height:25px;background:#c4c4c4"></div>
<div class="a" style="left:408px;top:344px;width:342px;height:24px;background:#f0f0f0"></div>
<div class="t" style="left:408px;top:351px;width:341px;text-align:right;font-size:12px;letter-spacing:-0.6px">0.0059</div>
<div class="a" style="left:750px;top:344px;width:1px;height:25px;background:#c4c4c4"></div>
<div class="a" style="left:751px;top:344px;width:339px;height:24px;background:#f0f0f0"></div>
<div class="t" style="left:751px;top:351px;width:338px;text-align:right;font-size:12px;letter-spacing:-0.6px">0.0183</div>
<div class="a" style="left:1090px;top:344px;width:1px;height:25px;background:#c4c4c4"></div>
<div class="a" style="left:1091px;top:344px;width:339px;height:24px;background:#f0f0f0"></div>
<div class="t" style="left:1091px;top:351px;width:338px;text-align:right;font-size:12px;letter-spacing:-0.6px">0.0186</div>
<div class="a" style="left:1430px;top:344px;width:1px;height:25px;background:#c4c4c4"></div>
<div class="a" style="left:1431px;top:344px;width:339px;height:24px;background:#f0f0f0"></div>
<div class="t" style="left:1431px;top:351px;width:338px;text-align:right;font-size:12px;letter-spacing:-0.6px">0.0150</div>
<div class="a" style="left:1770px;top:344px;width:1px;height:25px;background:#c4c4c4"></div>
<div class="a" style="left:64px;top:368px;width:1706px;height:1px;background:#c4c4c4"></div>
<div class="a" style="left:10px;top:369px;width:53px;height:24px;background:#efefef;border-top:1px solid #fff;border-left:1px solid #fff"></div>
<div class="t b" style="left:10px;top:376px;width:53px;text-align:center;font-size:12px">delta L</div>
<div class="a" style="left:10px;top:393px;width:53px;height:1px;background:#6a6a6a"></div>
<div class="a" style="left:64px;top:369px;width:343px;height:24px;background:#e0e0e0"></div>
<div class="t" style="left:64px;top:376px;width:342px;text-align:right;font-size:12px;letter-spacing:-0.25px">+19.1 %</div>
<div class="a" style="left:407px;top:369px;width:1px;height:25px;background:#c4c4c4"></div>
<div class="a" style="left:408px;top:369px;width:342px;height:24px;background:#e0e0e0"></div>
<div class="t" style="left:408px;top:376px;width:341px;text-align:right;font-size:12px;letter-spacing:-0.25px">+16.5 %</div>
<div class="a" style="left:750px;top:369px;width:1px;height:25px;background:#c4c4c4"></div>
<div class="a" style="left:751px;top:369px;width:339px;height:24px;background:#e0e0e0"></div>
<div class="t" style="left:751px;top:376px;width:338px;text-align:right;font-size:12px;letter-spacing:-0.25px">+13.8 %</div>
<div class="a" style="left:1090px;top:369px;width:1px;height:25px;background:#c4c4c4"></div>
<div class="a" style="left:1091px;top:369px;width:339px;height:24px;background:#e0e0e0"></div>
<div class="t" style="left:1091px;top:376px;width:338px;text-align:right;font-size:12px;letter-spacing:-0.25px">+4.1 %</div>
<div class="a" style="left:1430px;top:369px;width:1px;height:25px;background:#c4c4c4"></div>
<div class="a" style="left:1431px;top:369px;width:339px;height:24px;background:#e0e0e0"></div>
<div class="t" style="left:1431px;top:376px;width:338px;text-align:right;font-size:12px;letter-spacing:-0.25px">-41.0 %</div>
<div class="a" style="left:1770px;top:369px;width:1px;height:25px;background:#c4c4c4"></div>
<div class="a" style="left:64px;top:393px;width:1706px;height:1px;background:#c4c4c4"></div>
<div class="a" style="left:10px;top:394px;width:53px;height:3px;background:#efefef;border-top:1px solid #fff"></div>
<div class="a" style="left:64px;top:394px;width:1706px;height:3px;background:#f0f0f0"></div>
<div class="a" style="left:407px;top:394px;width:1px;height:3px;background:#c4c4c4"></div>
<div class="a" style="left:750px;top:394px;width:1px;height:3px;background:#c4c4c4"></div>
<div class="a" style="left:1090px;top:394px;width:1px;height:3px;background:#c4c4c4"></div>
<div class="a" style="left:1430px;top:394px;width:1px;height:3px;background:#c4c4c4"></div>
<div class="a" style="left:1770px;top:394px;width:1px;height:3px;background:#c4c4c4"></div>
<div class="a" style="left:1771px;top:221px;width:18px;height:177px;background:#f0f0f0;border-left:1px solid #fff"></div>
<div class="a" style="left:1772px;top:238px;width:15px;height:141px;background:#cdcdcd"></div>
<svg class="a" style="left:1771px;top:221px" width="18" height="177"><path d="M5 11l4-4 4 4" fill="none" stroke="#606060" stroke-width="1.6"/><path d="M5 167l4 4 4-4" fill="none" stroke="#606060" stroke-width="1.6"/></svg>
<div class="a" style="left:10px;top:398px;width:1779px;height:18px;background:#f0f0f0"></div>
<svg class="a" style="left:10px;top:398px" width="1779" height="18"><path d="M11 5l-4 4 4 4" fill="none" stroke="#b4b4b4" stroke-width="1.6"/><path d="M1751 5l4 4-4 4" fill="none" stroke="#b4b4b4" stroke-width="1.6"/></svg>
<!-- DISPLAY COLUMN -->
<div class="a" style="left:1812px;top:202px;width:89px;height:221px;background:#8c8c8c"></div>
<div class="a" style="left:1812px;top:202px;width:85px;height:104px;background:#fcfcfc"></div>
<div class="a" style="left:1815px;top:206px;width:80px;height:98px;background:#ececec;border:1px solid #707070;box-shadow:inset 0 0 0 1px #9a9a9a"></div>
<div class="a" style="left:1816px;top:207px;width:78px;height:18px;background:linear-gradient(#eaf0f9,#e4ebf5);border-bottom:1px solid #8e8e8e;border-radius:6px 6px 0 0;box-shadow:0 0 0 1px #9a9a9a inset"></div>
<div class="a" style="left:1816px;top:207px;width:78px;height:18px;background:linear-gradient(#eaf0f9,#e4ebf5);border-bottom:1px solid #8e8e8e;border-radius:6px 6px 0 0"></div>
<div class="hdt" style="left:1822px;top:211px">Display</div>
<svg class="a" style="left:1823px;top:224px" width="12" height="12"><circle cx="5.5" cy="5.5" r="4.8" fill="#f0f0f0" stroke="#c8c8c8" stroke-width="1"/><path d="M1.2 7.5A4.8 4.8 0 0 1 7.5 1.2" fill="none" stroke="#a0a0a0" stroke-width="1.2"/></svg>
<div class="t u" style="left:1841px;top:224px;color:#a0a0a0">Sensor</div>
<svg class="a" style="left:1823px;top:240px" width="12" height="12"><circle cx="5.5" cy="5.5" r="4.8" fill="#fff" stroke="#e8e8e8" stroke-width="1"/><path d="M1.2 7.5A4.8 4.8 0 0 1 7.5 1.2" fill="none" stroke="#404040" stroke-width="1.2"/></svg>
<div class="t u" style="left:1841px;top:240px;color:#000">RGB</div>
<svg class="a" style="left:1823px;top:256px" width="12" height="12"><circle cx="5.5" cy="5.5" r="4.8" fill="#fff" stroke="#e8e8e8" stroke-width="1"/><path d="M1.2 7.5A4.8 4.8 0 0 1 7.5 1.2" fill="none" stroke="#404040" stroke-width="1.2"/></svg>
<div class="t u" style="left:1841px;top:256px;color:#000">XYZ</div>
<svg class="a" style="left:1823px;top:272px" width="12" height="12"><circle cx="5.5" cy="5.5" r="4.8" fill="#fff" stroke="#e8e8e8" stroke-width="1"/><path d="M1.2 7.5A4.8 4.8 0 0 1 7.5 1.2" fill="none" stroke="#404040" stroke-width="1.2"/></svg>
<div class="t u" style="left:1841px;top:272px;color:#000">xyz</div>
<svg class="a" style="left:1823px;top:288px" width="12" height="12"><circle cx="5.5" cy="5.5" r="4.8" fill="#fff" stroke="#e8e8e8" stroke-width="1"/><path d="M1.2 7.5A4.8 4.8 0 0 1 7.5 1.2" fill="none" stroke="#404040" stroke-width="1.2"/><circle cx="5.5" cy="5.5" r="1.8" fill="#000"/></svg>
<div class="t u" style="left:1841px;top:288px;color:#000">xyY</div>
<div class="a" style="left:1813px;top:307px;width:82px;height:29px;background:#ebebeb;border-top:2px solid #fff;border-left:2px solid #fff;border-right:2px solid #7a7a7a;border-bottom:2px solid #7a7a7a"></div>
<div class="t u" style="left:1863px;top:318px;font-size:13.5px;letter-spacing:0.4px">Go</div>
<div class="a" style="left:1813px;top:336px;width:82px;height:30px;background:#ebebeb;border-top:2px solid #fff;border-left:2px solid #fff;border-right:2px solid #7a7a7a;border-bottom:2px solid #7a7a7a"></div>
<div class="t u" style="left:1851px;top:347px;font-size:13.5px;letter-spacing:0.4px">Delete</div>
<div class="a" style="left:1813px;top:366px;width:82px;height:30px;background:#ebebeb;border-top:2px solid #fff;border-left:2px solid #fff;border-right:2px solid #7a7a7a;border-bottom:2px solid #7a7a7a"></div>
<div class="t u" style="left:1858px;top:377px;font-size:13.5px;letter-spacing:0.4px">Refs</div>
<svg class="a" style="left:1818px;top:308px" width="32" height="29" viewBox="0 0 32 32" preserveAspectRatio="none"><use href="#filmb" width="32" height="32"/><path d="M3.5 1.5 L20.5 1 L22 7 L11 11.5 C9.5 6.5,7 4,3.5 3 Z" fill="#1850e0" stroke="#111" stroke-width="1"/><path d="M11 11.5 L22 7 L23.5 17.5 L13 22 Z" fill="#2060f0" stroke="#111" stroke-width="1"/><path d="M13 22 L23.5 17.5 L30 23 L23 31.5 L17.5 31.5 Z" fill="#1040d0" stroke="#111" stroke-width="1"/><path d="M15.5 23.5 L22.5 20 L27 23.5 L22 29 L18 29 Z" fill="#60b0ff" opacity="0.8"/></svg>
<svg class="a" style="left:1818px;top:338px" width="32" height="28"><path d="M2 5 Q15 0 29 4 L25 25 Q14 29 6 26 Z" fill="#b8e0f8" stroke="#6ab0e0" stroke-width="1"/><ellipse cx="15" cy="23" rx="10" ry="4" fill="#8cc8f0" opacity="0.7"/><path d="M19 11a5.5 5.5 0 0 0-9 3l-2-1 2.5 4 3.5-3-2 0a3.5 3.5 0 0 1 6-2z" fill="#20a040"/><path d="M11 21a5.5 5.5 0 0 0 9-3l2 1-2.5-4-3.5 3 2 0a3.5 3.5 0 0 1-6 2z" fill="#20a040"/></svg>
<svg class="a" style="left:1818px;top:372px" width="33" height="23"><path d="M0 23V11l2-2 2 1 2-7 2 4 2-1 2 2 3-2 1-4 2-3 2 2 1 3 2 0 2 3 2 2 3 0 2 3V23z" fill="#ffff00"/><rect x="1" y="12" width="3" height="11" fill="#000080"/><rect x="3" y="11" width="3" height="12" fill="#ff00ff"/><rect x="6" y="5" width="4" height="18" fill="#0000ff"/><rect x="10" y="8" width="3" height="15" fill="#00ffff"/><rect x="13" y="11" width="4" height="12" fill="#00ff00"/><rect x="17" y="3" width="5" height="20" fill="#ffff00"/><rect x="22" y="4" width="3" height="19" fill="#800000"/><rect x="25" y="10" width="7" height="13" fill="#ff0000"/></svg>
<div class="a" style="left:1818px;top:401px;width:56px;height:18px;background:#ececec"></div>
<div class="a" style="left:1819px;top:404px;width:12px;height:12px;background:#fff;border-top:1px solid #6a6a6a;border-left:1px solid #6a6a6a;border-right:1px solid #e0e0e0;border-bottom:1px solid #e0e0e0"></div>
<div class="t u" style="left:1837px;top:403px">Edit</div>
<!-- SELECTED COLOR PANE -->
<div class="a" style="left:5px;top:430px;width:379px;height:586px;background:#ececec;border:1px solid #707070;box-shadow:inset 0 0 0 1px #9a9a9a"></div>
<div class="a" style="left:6px;top:431px;width:377px;height:18px;background:linear-gradient(#eaf0f9,#e4ebf5);border-bottom:1px solid #8e8e8e;border-radius:6px 6px 0 0;box-shadow:0 0 0 1px #9a9a9a inset"></div>
<div class="a" style="left:6px;top:431px;width:377px;height:18px;background:linear-gradient(#eaf0f9,#e4ebf5);border-bottom:1px solid #8e8e8e;border-radius:6px 6px 0 0"></div>
<div class="hdt" style="left:12px;top:434px">Selected color</div>
<div class="a" style="left:14px;top:452px;width:113px;height:15px;background:#efefef"></div>
<div class="t" style="left:18px;top:452px;font-size:13px">RGB Levels</div>
<div class="a" style="left:14px;top:476px;width:200px;height:87px;background:#f0f0f0"></div>
<svg class="a" style="left:14px;top:476px" width="200" height="87"><path d="M0 44.5H200" stroke="#8a8a8a" stroke-width="1" stroke-dasharray="3 3"/><path d="M0 81 C6 77.5,12 76,25 76 C38 76,44 77.5,50 81 Z" fill="#a00000" stroke="#000" stroke-width="0.9"/><path d="M50 81 C56 77.5,62 76,75 76 C88 76,94 77.5,100 81 Z" fill="#00a000" stroke="#000" stroke-width="0.9"/><path d="M100 81 C106 77.5,112 76,125 76 C138 76,144 77.5,150 81 Z" fill="#0000a0" stroke="#000" stroke-width="0.9"/><path d="M150 81 C156 77.5,162 76,175 76 C188 76,194 77.5,200 81 Z" fill="#c08010" stroke="#000" stroke-width="0.9"/><rect x="0" y="80.5" width="200" height="5.5" fill="#000"/></svg>
<div class="t" style="left:14px;top:539px;width:50px;text-align:center;font-family:'Liberation Serif',serif;font-weight:bold;font-size:11px;color:#1a1a1a">0.0%</div>
<div class="t" style="left:64px;top:539px;width:50px;text-align:center;font-family:'Liberation Serif',serif;font-weight:bold;font-size:11px;color:#1a1a1a">0.0%</div>
<div class="t" style="left:114px;top:539px;width:50px;text-align:center;font-family:'Liberation Serif',serif;font-weight:bold;font-size:11px;color:#1a1a1a">0.0%</div>
<div class="t" style="left:164px;top:539px;width:50px;text-align:center;font-family:'Liberation Serif',serif;font-weight:bold;font-size:11px;color:#1a1a1a">dE 0.0</div>
<div class="a" style="left:16px;top:576px;width:192px;height:75px;background:#f0f0f0"></div>
<div class="t b" style="left:35px;top:578px;font-size:13px;letter-spacing:0.4px">Measure</div>
<div class="t b" style="left:127px;top:578px;font-size:13px;letter-spacing:0.25px">Reference</div>
<div class="a" style="left:14px;top:664px;width:46px;height:16px;background:#efefef"></div>
<div class="t" style="left:18px;top:665px;font-size:13px;letter-spacing:0.6px">Target</div>
<div class="a" style="left:50px;top:681px;width:116px;height:89px;border:1px solid #000;background:conic-gradient(from 0deg at 50% 50%, #40ff00 0deg, #b0e000 35deg, #ffb000 55deg, #ff3000 80deg, #ff0000 95deg, #ff0060 125deg, #ff00a0 140deg, #8000c0 180deg, #2000f0 215deg, #0000ff 235deg, #0070b0 270deg, #00c080 300deg, #00ff80 320deg, #40ff00 360deg)"></div>
<svg class="a" style="left:50px;top:681px" width="116" height="89"><rect x="17.5" y="13.5" width="81" height="62" rx="8" fill="#000" stroke="#fff" stroke-width="1"/>
<path d="M15 44.5H101" stroke="#fff" stroke-width="1" stroke-dasharray="3 3"/><path d="M58.5 13V76" stroke="#fff" stroke-width="1" stroke-dasharray="3 3"/>
<ellipse cx="58.5" cy="44.5" rx="20.5" ry="15.5" fill="none" stroke="#fff" stroke-width="1" stroke-dasharray="3 4"/></svg>
<div class="a" style="left:230px;top:450px;width:128px;height:14px;background:#efefef"></div>
<div class="t u" style="left:241px;top:452px;letter-spacing:0.7px">Current Measure</div>
<div class="a" style="left:220px;top:473px;width:153px;height:536px;background:#f0f0f0;border-top:2px solid #6e6e6e;border-left:2px solid #6e6e6e"></div>
<div class="a" style="left:222px;top:475px;width:55px;height:22px;background:#efefef;border-top:1px solid #fff;border-bottom:2px solid #6a6a6a"></div>
<div class="t b" style="left:222px;top:482px;width:55px;text-align:center;font-size:12px">Y cd/m<sup style="font-size:8px;vertical-align:5px;line-height:0">2</sup></div>
<div class="a" style="left:278px;top:475px;width:76px;height:22px;background:#fff;border-bottom:1px solid #c4c4c4"></div>
<div class="a" style="left:222px;top:497px;width:55px;height:23px;background:#efefef;border-top:1px solid #fff;border-bottom:2px solid #6a6a6a"></div>
<div class="t b" style="left:222px;top:504px;width:55px;text-align:center;font-size:12px">Y ftL</div>
<div class="a" style="left:278px;top:497px;width:76px;height:23px;background:#fff;border-bottom:1px solid #c4c4c4"></div>
<div class="a" style="left:222px;top:520px;width:55px;height:23px;background:#efefef;border-top:1px solid #fff;border-bottom:2px solid #6a6a6a"></div>
<div class="t b" style="left:222px;top:527px;width:55px;text-align:center;font-size:12px">T°</div>
<div class="a" style="left:278px;top:520px;width:76px;height:23px;background:#fff;border-bottom:1px solid #c4c4c4"></div>
<div class="a" style="left:222px;top:543px;width:55px;height:23px;background:#efefef;border-top:1px solid #fff;border-bottom:2px solid #6a6a6a"></div>
<div class="t b" style="left:222px;top:550px;width:55px;text-align:center;font-size:12px">X</div>
<div class="a" style="left:278px;top:543px;width:76px;height:23px;background:#e0e0e0;border-bottom:1px solid #c4c4c4"></div>
<div class="a" style="left:222px;top:566px;width:55px;height:23px;background:#efefef;border-top:1px solid #fff;border-bottom:2px solid #6a6a6a"></div>
<div class="t b" style="left:222px;top:573px;width:55px;text-align:center;font-size:12px">Y</div>
<div class="a" style="left:278px;top:566px;width:76px;height:23px;background:#e0e0e0;border-bottom:1px solid #c4c4c4"></div>
<div class="a" style="left:222px;top:589px;width:55px;height:23px;background:#efefef;border-top:1px solid #fff;border-bottom:2px solid #6a6a6a"></div>
<div class="t b" style="left:222px;top:596px;width:55px;text-align:center;font-size:12px">Z</div>
<div class="a" style="left:278px;top:589px;width:76px;height:23px;background:#e0e0e0;border-bottom:1px solid #c4c4c4"></div>
<div class="a" style="left:222px;top:612px;width:55px;height:23px;background:#efefef;border-top:1px solid #fff;border-bottom:2px solid #6a6a6a"></div>
<div class="t b" style="left:222px;top:619px;width:55px;text-align:center;font-size:12px">R</div>
<div class="a" style="left:278px;top:612px;width:76px;height:23px;background:#fff;border-bottom:1px solid #c4c4c4"></div>
<div class="a" style="left:222px;top:635px;width:55px;height:23px;background:#efefef;border-top:1px solid #fff;border-bottom:2px solid #6a6a6a"></div>
<div class="t b" style="left:222px;top:642px;width:55px;text-align:center;font-size:12px">G</div>
<div class="a" style="left:278px;top:635px;width:76px;height:23px;background:#fff;border-bottom:1px solid #c4c4c4"></div>
<div class="a" style="left:222px;top:658px;width:55px;height:23px;background:#efefef;border-top:1px solid #fff;border-bottom:2px solid #6a6a6a"></div>
<div class="t b" style="left:222px;top:665px;width:55px;text-align:center;font-size:12px">B</div>
<div class="a" style="left:278px;top:658px;width:76px;height:23px;background:#fff;border-bottom:1px solid #c4c4c4"></div>
<div class="a" style="left:222px;top:681px;width:55px;height:23px;background:#efefef;border-top:1px solid #fff;border-bottom:2px solid #6a6a6a"></div>
<div class="t b" style="left:222px;top:688px;width:55px;text-align:center;font-size:12px">x</div>
<div class="a" style="left:278px;top:681px;width:76px;height:23px;background:#e0e0e0;border-bottom:1px solid #c4c4c4"></div>
<div class="a" style="left:222px;top:704px;width:55px;height:23px;background:#efefef;border-top:1px solid #fff;border-bottom:2px solid #6a6a6a"></div>
<div class="t b" style="left:222px;top:711px;width:55px;text-align:center;font-size:12px">y</div>
<div class="a" style="left:278px;top:704px;width:76px;height:23px;background:#e0e0e0;border-bottom:1px solid #c4c4c4"></div>
<div class="a" style="left:222px;top:727px;width:55px;height:23px;background:#efefef;border-top:1px solid #fff;border-bottom:2px solid #6a6a6a"></div>
<div class="t b" style="left:222px;top:734px;width:55px;text-align:center;font-size:12px">Y</div>
<div class="a" style="left:278px;top:727px;width:76px;height:23px;background:#e0e0e0;border-bottom:1px solid #c4c4c4"></div>
<div class="a" style="left:222px;top:750px;width:55px;height:23px;background:#efefef;border-top:1px solid #fff;border-bottom:2px solid #6a6a6a"></div>
<div class="t b" style="left:222px;top:757px;width:55px;text-align:center;font-size:12px">x</div>
<div class="a" style="left:278px;top:750px;width:76px;height:23px;background:#fff;border-bottom:1px solid #c4c4c4"></div>
<div class="a" style="left:222px;top:773px;width:55px;height:23px;background:#efefef;border-top:1px solid #fff;border-bottom:2px solid #6a6a6a"></div>
<div class="t b" style="left:222px;top:780px;width:55px;text-align:center;font-size:12px">y</div>
<div class="a" style="left:278px;top:773px;width:76px;height:23px;background:#fff;border-bottom:1px solid #c4c4c4"></div>
<div class="a" style="left:222px;top:796px;width:55px;height:23px;background:#efefef;border-top:1px solid #fff;border-bottom:2px solid #6a6a6a"></div>
<div class="t b" style="left:222px;top:803px;width:55px;text-align:center;font-size:12px">z</div>
<div class="a" style="left:278px;top:796px;width:76px;height:23px;background:#fff;border-bottom:1px solid #c4c4c4"></div>
<div class="a" style="left:222px;top:819px;width:55px;height:23px;background:#efefef;border-top:1px solid #fff;border-bottom:2px solid #6a6a6a"></div>
<div class="t b" style="left:222px;top:826px;width:55px;text-align:center;font-size:12px">L</div>
<div class="a" style="left:278px;top:819px;width:76px;height:23px;background:#e0e0e0;border-bottom:1px solid #c4c4c4"></div>
<div class="a" style="left:222px;top:842px;width:55px;height:23px;background:#efefef;border-top:1px solid #fff;border-bottom:2px solid #6a6a6a"></div>
<div class="t b" style="left:222px;top:849px;width:55px;text-align:center;font-size:12px">a</div>
<div class="a" style="left:278px;top:842px;width:76px;height:23px;background:#e0e0e0;border-bottom:1px solid #c4c4c4"></div>
<div class="a" style="left:222px;top:865px;width:55px;height:23px;background:#efefef;border-top:1px solid #fff;border-bottom:2px solid #6a6a6a"></div>
<div class="t b" style="left:222px;top:872px;width:55px;text-align:center;font-size:12px">b</div>
<div class="a" style="left:278px;top:865px;width:76px;height:23px;background:#e0e0e0;border-bottom:1px solid #c4c4c4"></div>
<div class="a" style="left:222px;top:888px;width:55px;height:23px;background:#efefef;border-top:1px solid #fff;border-bottom:2px solid #6a6a6a"></div>
<div class="t b" style="left:222px;top:895px;width:55px;text-align:center;font-size:12px">L</div>
<div class="a" style="left:278px;top:888px;width:76px;height:23px;background:#fff;border-bottom:1px solid #c4c4c4"></div>
<div class="a" style="left:222px;top:911px;width:55px;height:23px;background:#efefef;border-top:1px solid #fff;border-bottom:2px solid #6a6a6a"></div>
<div class="t b" style="left:222px;top:918px;width:55px;text-align:center;font-size:12px">C</div>
<div class="a" style="left:278px;top:911px;width:76px;height:23px;background:#fff;border-bottom:1px solid #c4c4c4"></div>
<div class="a" style="left:222px;top:934px;width:55px;height:23px;background:#efefef;border-top:1px solid #fff;border-bottom:2px solid #6a6a6a"></div>
<div class="t b" style="left:222px;top:941px;width:55px;text-align:center;font-size:12px">H</div>
<div class="a" style="left:278px;top:934px;width:76px;height:23px;background:#fff;border-bottom:1px solid #c4c4c4"></div>
<div class="a" style="left:222px;top:957px;width:55px;height:23px;background:#efefef;border-top:1px solid #fff;border-bottom:2px solid #6a6a6a"></div>
<div class="t b" style="left:222px;top:964px;width:55px;text-align:center;font-size:12px">L</div>
<div class="a" style="left:278px;top:957px;width:76px;height:23px;background:#e0e0e0;border-bottom:1px solid #c4c4c4"></div>
<div class="a" style="left:222px;top:980px;width:55px;height:23px;background:#efefef;border-top:1px solid #fff;border-bottom:2px solid #6a6a6a"></div>
<div class="t b" style="left:222px;top:987px;width:55px;text-align:center;font-size:12px">M</div>
<div class="a" style="left:278px;top:980px;width:76px;height:23px;background:#e0e0e0;border-bottom:1px solid #c4c4c4"></div>
<div class="a" style="left:222px;top:1003px;width:55px;height:5px;background:#efefef;border-top:1px solid #fff"></div>
<div class="a" style="left:278px;top:1003px;width:76px;height:5px;background:#e0e0e0"></div>
<div class="a" style="left:277px;top:475px;width:1px;height:533px;background:#6a6a6a"></div>
<div class="a" style="left:354px;top:475px;width:1px;height:533px;background:#c4c4c4"></div>
<div class="a" style="left:355px;top:475px;width:18px;height:533px;background:#f0f0f0;border-left:1px solid #fff"></div>
<div class="a" style="left:356px;top:492px;width:15px;height:480px;background:#cdcdcd"></div>
<svg class="a" style="left:355px;top:475px" width="18" height="533"><path d="M5 12l4-4 4 4" fill="none" stroke="#606060" stroke-width="1.6"/><path d="M5 519l4 4 4-4" fill="none" stroke="#606060" stroke-width="1.6"/></svg>
<!-- INFORMATION PANE -->
<div class="a" style="left:391px;top:430px;width:1504px;height:586px;background:#ececec;border:1px solid #707070;box-shadow:inset 0 0 0 1px #9a9a9a"></div>
<div class="a" style="left:392px;top:431px;width:1502px;height:18px;background:linear-gradient(#eaf0f9,#e4ebf5);border-bottom:1px solid #8e8e8e;border-radius:6px 6px 0 0;box-shadow:0 0 0 1px #9a9a9a inset"></div>
<div class="a" style="left:392px;top:431px;width:1502px;height:18px;background:linear-gradient(#eaf0f9,#e4ebf5);border-bottom:1px solid #8e8e8e;border-radius:6px 6px 0 0"></div>
<div class="hdt" style="left:398px;top:434px">Information</div>
<div class="a" style="left:396px;top:452px;width:302px;height:23px;background:#fff;border-top:2px solid #6e6e6e;border-left:2px solid #6e6e6e;border-right:1px solid #f4f4f4;border-bottom:1px solid #fff"></div>
<div class="a" style="left:400px;top:455px;width:277px;height:17px;background:#0078d7"></div>
<div class="t" style="left:401px;top:457px;font-size:13px;color:#fff;letter-spacing:0.15px">RGB Levels</div>
<div class="a" style="left:678px;top:454px;width:19px;height:19px;background:#f0f0f0;border-right:2px solid #707070;border-bottom:2px solid #707070;border-top:1px solid #fff;border-left:1px solid #fff"></div>
<svg class="a" style="left:683px;top:461px" width="9" height="5"><path d="M0.5 0.5h7.5l-3.75 4z" fill="#000"/></svg>
<div class="a" style="left:398px;top:482px;width:1497px;height:528px;border-top:2px solid #6e6e6e;border-left:2px solid #6e6e6e;border-right:2px solid #fff;border-bottom:2px solid #fff"></div>
<div class="a" style="left:400px;top:484px;width:1493px;height:524px;border-top:1px solid #a0a0a0;border-left:1px solid #a0a0a0;border-right:1px solid #e8e8e8;border-bottom:4px solid #f4f4f4"></div>
<div class="a" style="left:401px;top:485px;width:1491px;height:519px;border-top:1px solid #646464;border-left:1px solid #646464"></div>
<svg class="a" style="left:402px;top:486px" width="1488" height="518" viewBox="402 486 1488 518">
<defs><linearGradient id="cbg" x1="0" y1="0" x2="1" y2="0"><stop offset="0" stop-color="#202020"/><stop offset="1" stop-color="#fdfdfd"/></linearGradient></defs>
<rect x="402" y="486" width="1488" height="518" fill="url(#cbg)"/>
<text x="1055" y="499.6" font-family="Liberation Sans" font-weight="bold" font-size="14" letter-spacing="0.25" fill="#e0e000">Gray Scale Balance w/gamma</text>
<text x="1880" y="962" text-anchor="end" font-family="Liberation Sans" font-weight="bold" font-size="16" fill="#9a9a9a">hcfr.sourceforge.net</text>
<text x="404" y="507" font-family="Liberation Serif" font-size="14" letter-spacing="-0.15" fill="#e0e0e0">140%</text>
<text x="404" y="533" font-family="Liberation Serif" font-size="14" letter-spacing="-0.15" fill="#e0e0e0">130%</text>
<text x="404" y="559" font-family="Liberation Serif" font-size="14" letter-spacing="-0.15" fill="#e0e0e0">120%</text>
<text x="404" y="585" font-family="Liberation Serif" font-size="14" letter-spacing="-0.15" fill="#e0e0e0">110%</text>
<text x="404" y="611" font-family="Liberation Serif" font-size="14" letter-spacing="-0.15" fill="#e0e0e0">100%</text>
<text x="404" y="637" font-family="Liberation Serif" font-size="14" letter-spacing="-0.15" fill="#e0e0e0">90%</text>
<text x="404" y="663" font-family="Liberation Serif" font-size="14" letter-spacing="-0.15" fill="#e0e0e0">80%</text>
<text x="404" y="689" font-family="Liberation Serif" font-size="14" letter-spacing="-0.15" fill="#e0e0e0">70%</text>
<text x="404" y="715" font-family="Liberation Serif" font-size="14" letter-spacing="-0.15" fill="#e0e0e0">60%</text>
<text x="404" y="792" font-family="Liberation Serif" font-size="14" fill="#e0e0e0">8</text>
<text x="404" y="844" font-family="Liberation Serif" font-size="14" fill="#e0e0e0">6</text>
<text x="404" y="896" font-family="Liberation Serif" font-size="14" fill="#e0e0e0">4</text>
<text x="404" y="948" font-family="Liberation Serif" font-size="14" fill="#e0e0e0">2</text>
<text x="552.3" y="741" font-family="Liberation Serif" font-size="14" letter-spacing="-0.2" fill="#e6e6e6">10% White</text>
<text x="552.3" y="999.5" font-family="Liberation Serif" font-size="14" letter-spacing="-0.2" fill="#e6e6e6">10% White</text>
<text x="701.1" y="741" font-family="Liberation Serif" font-size="14" letter-spacing="-0.2" fill="#cccccc">20% White</text>
<text x="701.1" y="999.5" font-family="Liberation Serif" font-size="14" letter-spacing="-0.2" fill="#cccccc">20% White</text>
<text x="849.9" y="741" font-family="Liberation Serif" font-size="14" letter-spacing="-0.2" fill="#b3b3b3">30% White</text>
<text x="849.9" y="999.5" font-family="Liberation Serif" font-size="14" letter-spacing="-0.2" fill="#b3b3b3">30% White</text>
<text x="998.7" y="741" font-family="Liberation Serif" font-size="14" letter-spacing="-0.2" fill="#999999">40% White</text>
<text x="998.7" y="999.5" font-family="Liberation Serif" font-size="14" letter-spacing="-0.2" fill="#999999">40% White</text>
<text x="1147.5" y="741" font-family="Liberation Serif" font-size="14" letter-spacing="-0.2" fill="#808080">50% White</text>
<text x="1147.5" y="999.5" font-family="Liberation Serif" font-size="14" letter-spacing="-0.2" fill="#808080">50% White</text>
<text x="1296.3" y="741" font-family="Liberation Serif" font-size="14" letter-spacing="-0.2" fill="#666666">60% White</text>
<text x="1296.3" y="999.5" font-family="Liberation Serif" font-size="14" letter-spacing="-0.2" fill="#666666">60% White</text>
<text x="1445.1" y="741" font-family="Liberation Serif" font-size="14" letter-spacing="-0.2" fill="#4d4d4d">70% White</text>
<text x="1445.1" y="999.5" font-family="Liberation Serif" font-size="14" letter-spacing="-0.2" fill="#4d4d4d">70% White</text>
<text x="1593.9" y="741" font-family="Liberation Serif" font-size="14" letter-spacing="-0.2" fill="#333333">80% White</text>
<text x="1593.9" y="999.5" font-family="Liberation Serif" font-size="14" letter-spacing="-0.2" fill="#333333">80% White</text>
<text x="1742.7" y="741" font-family="Liberation Serif" font-size="14" letter-spacing="-0.2" fill="#1a1a1a">90% White</text>
<text x="1742.7" y="999.5" font-family="Liberation Serif" font-size="14" letter-spacing="-0.2" fill="#1a1a1a">90% White</text>
<path d="M402 511.5H1890" stroke="#044040" stroke-width="1"/>
<path d="M402 537.5H1890" stroke="#044040" stroke-width="1"/>
<path d="M402 563.5H1890" stroke="#044040" stroke-width="1"/>
<path d="M402 589.5H1890" stroke="#044040" stroke-width="1"/>
<path d="M402 615.5H1890" stroke="#044040" stroke-width="1"/>
<path d="M402 641.5H1890" stroke="#044040" stroke-width="1"/>
<path d="M402 667.5H1890" stroke="#044040" stroke-width="1"/>
<path d="M402 693.5H1890" stroke="#044040" stroke-width="1"/>
<path d="M402 719.5H1890" stroke="#044040" stroke-width="1"/>
<path d="M402 796.5H1890" stroke="#044040" stroke-width="1"/>
<path d="M402 848.5H1890" stroke="#044040" stroke-width="1"/>
<path d="M402 900.5H1890" stroke="#044040" stroke-width="1"/>
<path d="M402 952.5H1890" stroke="#044040" stroke-width="1"/>
<path d="M402.5 486V1004" stroke="#044040" stroke-width="1"/>
<path d="M550.5 486V1004" stroke="#044040" stroke-width="1"/>
<path d="M699.5 486V1004" stroke="#044040" stroke-width="1"/>
<path d="M848.5 486V1004" stroke="#044040" stroke-width="1"/>
<path d="M997.5 486V1004" stroke="#044040" stroke-width="1"/>
<path d="M1146.5 486V1004" stroke="#044040" stroke-width="1"/>
<path d="M1294.5 486V1004" stroke="#044040" stroke-width="1"/>
<path d="M1443.5 486V1004" stroke="#044040" stroke-width="1"/>
<path d="M1592.5 486V1004" stroke="#044040" stroke-width="1"/>
<path d="M1741.5 486V1004" stroke="#044040" stroke-width="1"/>
<path d="M402 615.5H1890" stroke="#fff" stroke-width="1" stroke-dasharray="3 2"/>
<rect x="402" y="612" width="4" height="7" fill="#e8e8e8"/>
<polyline points="551,510 700,543.75 849.5,576.75 998.5,590 1148,598 1292,604.5 1441,605.5 1591,606.9 1740,608 1888,609.6" fill="none" stroke="#ff0000" stroke-width="2.2"/>
<rect x="547.5" y="506.5" width="7" height="7" fill="#ff0000"/>
<rect x="696.5" y="540.25" width="7" height="7" fill="#ff0000"/>
<rect x="846.0" y="573.25" width="7" height="7" fill="#ff0000"/>
<rect x="995.0" y="586.5" width="7" height="7" fill="#ff0000"/>
<rect x="1144.5" y="594.5" width="7" height="7" fill="#ff0000"/>
<rect x="1288.5" y="601.0" width="7" height="7" fill="#ff0000"/>
<rect x="1437.5" y="602.0" width="7" height="7" fill="#ff0000"/>
<rect x="1587.5" y="603.4" width="7" height="7" fill="#ff0000"/>
<rect x="1736.5" y="604.5" width="7" height="7" fill="#ff0000"/>
<rect x="1884.5" y="606.1" width="7" height="7" fill="#ff0000"/>
<polyline points="551,501 700,533.75 849.5,568 998.5,585.75 1148,598.8 1292,605.9 1441,608 1591,609 1740,611.7 1888,614" fill="none" stroke="#00ff00" stroke-width="2.2"/>
<rect x="547.5" y="497.5" width="7" height="7" fill="#00ff00"/>
<rect x="696.5" y="530.25" width="7" height="7" fill="#00ff00"/>
<rect x="846.0" y="564.5" width="7" height="7" fill="#00ff00"/>
<rect x="995.0" y="582.25" width="7" height="7" fill="#00ff00"/>
<rect x="1144.5" y="595.3" width="7" height="7" fill="#00ff00"/>
<rect x="1288.5" y="602.4" width="7" height="7" fill="#00ff00"/>
<rect x="1437.5" y="604.5" width="7" height="7" fill="#00ff00"/>
<rect x="1587.5" y="605.5" width="7" height="7" fill="#00ff00"/>
<rect x="1736.5" y="608.2" width="7" height="7" fill="#00ff00"/>
<rect x="1884.5" y="610.5" width="7" height="7" fill="#00ff00"/>
<polyline points="551,491.75 700,491.75 849.5,540 998.5,568.75 1148,587.6 1292,599.8 1441,607.5 1591,613.5 1740,617.3 1888,620.4" fill="none" stroke="#0000ff" stroke-width="2.2"/>
<rect x="547.5" y="488.25" width="7" height="7" fill="#0000ff"/>
<rect x="696.5" y="488.25" width="7" height="7" fill="#0000ff"/>
<rect x="846.0" y="536.5" width="7" height="7" fill="#0000ff"/>
<rect x="995.0" y="565.25" width="7" height="7" fill="#0000ff"/>
<rect x="1144.5" y="584.1" width="7" height="7" fill="#0000ff"/>
<rect x="1288.5" y="596.3" width="7" height="7" fill="#0000ff"/>
<rect x="1437.5" y="604.0" width="7" height="7" fill="#0000ff"/>
<rect x="1587.5" y="610.0" width="7" height="7" fill="#0000ff"/>
<rect x="1736.5" y="613.8" width="7" height="7" fill="#0000ff"/>
<rect x="1884.5" y="616.9" width="7" height="7" fill="#0000ff"/>
<polyline points="551,976.6 700,927.7 849.5,929.5 998.5,939.7 1148,953.2 1292,970.2 1441,983.7 1591,990.7 1740,976.6 1888,969.5" fill="none" stroke="#ff00ff" stroke-width="2.2"/>
<rect x="547.5" y="973.1" width="7" height="7" fill="#ff00ff"/>
<rect x="696.5" y="924.2" width="7" height="7" fill="#ff00ff"/>
<rect x="846.0" y="926.0" width="7" height="7" fill="#ff00ff"/>
<rect x="995.0" y="936.2" width="7" height="7" fill="#ff00ff"/>
<rect x="1144.5" y="949.7" width="7" height="7" fill="#ff00ff"/>
<rect x="1288.5" y="966.7" width="7" height="7" fill="#ff00ff"/>
<rect x="1437.5" y="980.2" width="7" height="7" fill="#ff00ff"/>
<rect x="1587.5" y="987.2" width="7" height="7" fill="#ff00ff"/>
<rect x="1736.5" y="973.1" width="7" height="7" fill="#ff00ff"/>
<rect x="1884.5" y="966.0" width="7" height="7" fill="#ff00ff"/>
</svg>
<!-- BOTTOM: scrollbar, tabs, status -->
<div class="a" style="left:0;top:1019px;width:1901px;height:2px;background:#bcbcbc"></div>
<div class="a" style="left:0;top:1021px;width:1920px;height:1px;background:#fff"></div>
<div class="a" style="left:0;top:1022px;width:1919px;height:18px;background:#f0f0f0"></div>
<div class="a" style="left:19px;top:1023px;width:1825px;height:15px;background:#cdcdcd"></div>
<svg class="a" style="left:0;top:1022px" width="1919" height="18"><path d="M11 5l-4 4 4 4" fill="none" stroke="#555" stroke-width="2"/><path d="M1890 5l4 4-4 4" fill="none" stroke="#555" stroke-width="2"/></svg>
<div class="a" style="left:0;top:1040px;width:1920px;height:2px;background:#fcfcfc"></div>
<div class="a" style="left:0;top:1042px;width:1920px;height:1px;background:#000"></div>
<div class="a" style="left:0;top:1043px;width:1920px;height:18px;background:#f0f0f0"></div>
<!-- tab nav buttons -->
<div class="a" style="left:0;top:1043px;width:54px;height:18px;background:#000"></div>
<div class="a" style="left:1px;top:1043px;width:16px;height:16px;background:#ececec;border-right:2px solid #8a8a8a;border-bottom:2px solid #8a8a8a;border-top:1px solid #fff;border-left:1px solid #fff"></div>
<div class="a" style="left:18px;top:1043px;width:16px;height:16px;background:#ececec;border-right:2px solid #8a8a8a;border-bottom:2px solid #8a8a8a;border-top:1px solid #fff;border-left:1px solid #fff"></div>
<div class="a" style="left:35px;top:1043px;width:17px;height:16px;background:#ececec;border-right:2px solid #8a8a8a;border-bottom:2px solid #8a8a8a;border-top:1px solid #fff;border-left:1px solid #fff"></div>
<svg class="a" style="left:0;top:1043px" width="54" height="18"><path d="M5.5 4.5l7 7M12.5 4.5l-7 7" stroke="#000" stroke-width="1.2"/><path d="M28 5l-4 3.5 4 3.5z" fill="#000"/><path d="M42 5l4 3.5-4 3.5z" fill="#000"/></svg>
<svg class="a" style="left:0;top:1042px" width="400" height="19">
<path d="M240 0.5 L353 0.5 L345 18 L247 18 Z" fill="#ececec"/>
<path d="M240 0.5 L247 18" stroke="#000" stroke-width="1.1" fill="none"/><path d="M353 0.5 L345 18" stroke="#000" stroke-width="1.1" fill="none"/><path d="M247 18.5 H345" stroke="#a0a0a0" stroke-width="1"/>
<path d="M187 0.5 L248 0.5 L240 18 L194 18 Z" fill="#ececec"/>
<path d="M187 0.5 L194 18" stroke="#000" stroke-width="1.1" fill="none"/><path d="M248 0.5 L240 18" stroke="#000" stroke-width="1.1" fill="none"/><path d="M194 18.5 H240" stroke="#a0a0a0" stroke-width="1"/>
<path d="M120 0.5 L195 0.5 L187 18 L127 18 Z" fill="#ececec"/>
<path d="M120 0.5 L127 18" stroke="#000" stroke-width="1.1" fill="none"/><path d="M195 0.5 L187 18" stroke="#000" stroke-width="1.1" fill="none"/><path d="M127 18.5 H187" stroke="#a0a0a0" stroke-width="1"/>
<path d="M54 0 L128 0 L119 18.5 L63 18.5 Z" fill="#fff"/>
<path d="M54 0.5 L63 18" stroke="#000" stroke-width="1.1" fill="none"/><path d="M128 0.5 L119 18" stroke="#000" stroke-width="1.1" fill="none"/><path d="M63 18.5 H119" stroke="#c8c8c8" stroke-width="1"/>
</svg>
<div class="t b" style="left:66px;top:1047px;font-size:10px;letter-spacing:0.6px">Measures</div>
<div class="t" style="left:134px;top:1047px;font-size:9.5px">Luminance</div>
<div class="t" style="left:200px;top:1047px;font-size:9.5px">Gamma</div>
<div class="t" style="left:258px;top:1047px;font-size:9.5px;letter-spacing:-0.15px">Color temperature</div>
<svg class="a" style="left:1750px;top:1044px" width="16" height="15"><path d="M1 1h14v9l-2 4h-3l-1-2-2 2h-3l-3-4z" fill="#7a7a00" stroke="#000" stroke-width="0.8"/><rect x="3" y="3" width="7" height="5" fill="#fff"/><path d="M3.5 4.5h4l1 2-2 1" stroke="#e00" stroke-width="1.4" fill="none"/><path d="M9 10h5l-1 4h-3z" fill="#ff0"/></svg>
<div class="a" style="left:1846px;top:1045px;width:12px;height:12px;background:#fff;border-top:1px solid #6a6a6a;border-left:1px solid #6a6a6a;border-right:1px solid #e0e0e0;border-bottom:1px solid #e0e0e0"></div>
<div class="t" style="left:1865px;top:1045px;font-size:10.8px">Reference</div>
<!-- STATUS BAR -->
<div class="a" style="left:0;top:1061px;width:1920px;height:17px;background:linear-gradient(90deg,#e3e9f3,#eef3fa)"></div>
<div class="a" style="left:0;top:1078px;width:1920px;height:2px;background:#3a3a3a"></div>
<div class="t" style="left:2px;top:1066px;font-size:11px">Ready</div>
<div class="a" style="left:1743px;top:1062px;width:74px;height:16px;border-top:1px solid #a6b8d2;border-left:1px solid #a6b8d2;background:#e8eef7"></div>
<div class="a" style="left:1820px;top:1062px;width:28px;height:16px;border-top:1px solid #a6b8d2;border-left:1px solid #a6b8d2;background:#e8eef7"></div>
<div class="a" style="left:1851px;top:1062px;width:33px;height:16px;border-top:1px solid #a6b8d2;border-left:1px solid #a6b8d2;background:#e8eef7"></div>
<div class="a" style="left:1887px;top:1062px;width:33px;height:16px;border-top:1px solid #a6b8d2;border-left:1px solid #a6b8d2;background:#e8eef7"></div>
<div class="t" style="left:1822px;top:1066px;font-size:11px">CAP</div>
<div class="t" style="left:1853px;top:1066px;font-size:11px">NUM</div>
<div class="a" style="left:55px;top:1042px;width:73px;height:1px;background:#f8f8f8"></div>
</body></html>
